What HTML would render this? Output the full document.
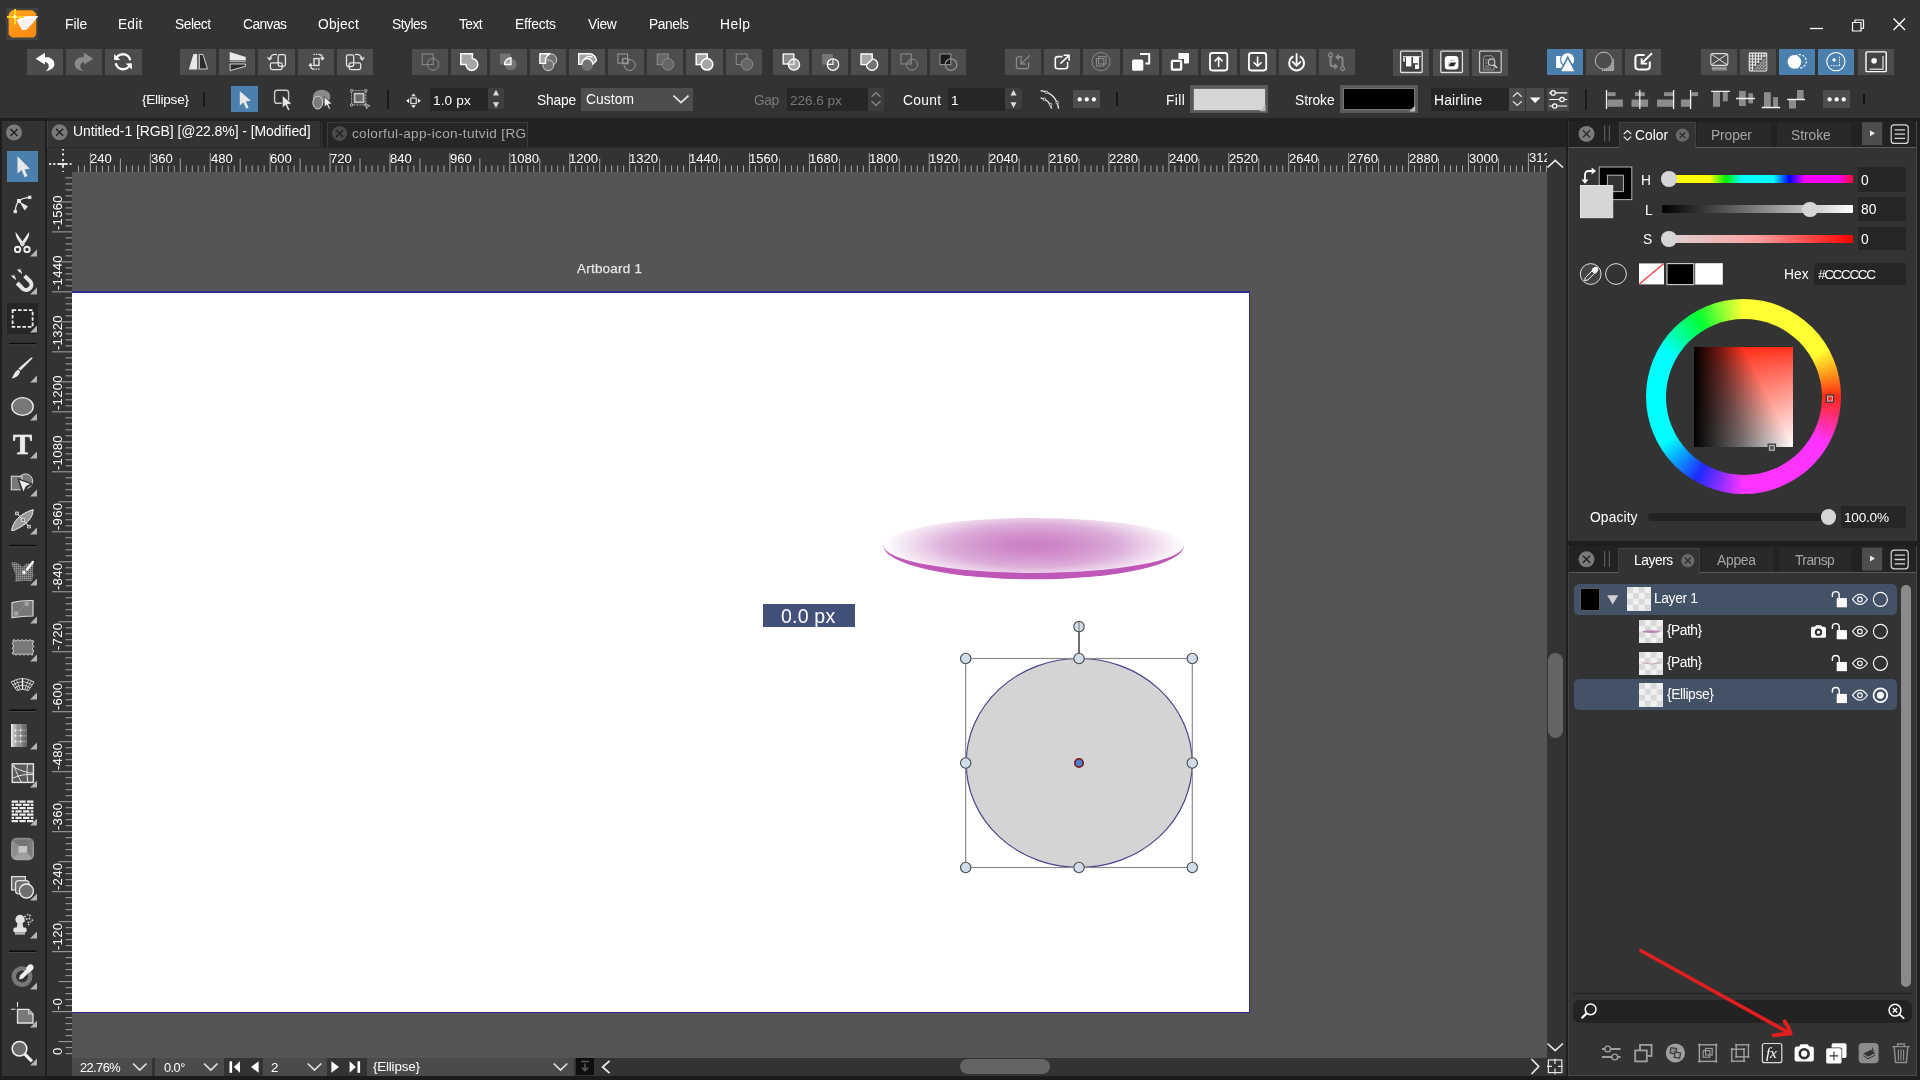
<!DOCTYPE html>
<html lang="en"><head><meta charset="utf-8"><title>Untitled-1 [RGB] - Vector editor</title>
<style>
html,body{margin:0;padding:0;}
body{width:1920px;height:1080px;overflow:hidden;background:#333333;position:relative;
font-family:"Liberation Sans",sans-serif;font-size:13.5px;color:#fff;}
body>div,body>span,body>svg{position:absolute;display:block;}
span{white-space:nowrap;will-change:transform;}
svg{overflow:visible;}
</style></head><body>
<div style="left:72px;top:172px;width:1475.2px;height:886px;background:#555555;"></div>
<div style="left:72px;top:291px;width:1178px;height:722px;background:#2c2c8c;"></div>
<div style="left:72px;top:292.5px;width:1176.5px;height:719px;background:#ffffff;"></div>
<span style="left:577.25px;top:261px;font-size:13.4px;line-height:15px;color:#e4e4e4;letter-spacing:0.26px;-webkit-text-stroke:0.25px #e4e4e4;">Artboard 1</span>
<svg style="left:0px;top:0px;" width="1920" height="1080" viewBox="0 0 1920 1080">
<defs>
<radialGradient id="pg" gradientUnits="userSpaceOnUse" cx="1033.7" cy="545.4" r="150.3" gradientTransform="translate(0 545.4) scale(1 0.245) translate(0 -545.4)">
<stop offset="0" stop-color="#cb80c6"/><stop offset="0.15" stop-color="#cd86c8"/><stop offset="0.35" stop-color="#d396cf"/><stop offset="0.58" stop-color="#ddaed9"/>
<stop offset="0.75" stop-color="#ebd0e9"/><stop offset="0.9" stop-color="#f7ecf6"/><stop offset="1" stop-color="#ffffff"/>
</radialGradient>
</defs>
<path d="M883.4 545.8A150.3 33.5 0 0 0 1184 545.8Z" fill="#bf57b8"/>
<ellipse cx="1033.7" cy="545.4" rx="150.2" ry="27.5" fill="url(#pg)"/>
<ellipse cx="1079.2" cy="763" rx="113" ry="104.5" fill="#d4d4d4" stroke="#46468e" stroke-width="1.2"/>
<rect x="965.7" y="658.5" width="226.6" height="209" fill="none" stroke="#8a8a8a" stroke-width="1.2"/>
<line x1="1079" y1="627" x2="1079" y2="658" stroke="#333" stroke-width="1.4"/>
<circle cx="965.7" cy="658.5" r="5.2" fill="#cfdcea" stroke="#4a4a4a" stroke-width="1.1"/><circle cx="1079" cy="658.5" r="5.2" fill="#cfdcea" stroke="#4a4a4a" stroke-width="1.1"/><circle cx="1192.3" cy="658.5" r="5.2" fill="#cfdcea" stroke="#4a4a4a" stroke-width="1.1"/><circle cx="965.7" cy="763" r="5.2" fill="#cfdcea" stroke="#4a4a4a" stroke-width="1.1"/><circle cx="1192.3" cy="763" r="5.2" fill="#cfdcea" stroke="#4a4a4a" stroke-width="1.1"/><circle cx="965.7" cy="867.5" r="5.2" fill="#cfdcea" stroke="#4a4a4a" stroke-width="1.1"/><circle cx="1079" cy="867.5" r="5.2" fill="#cfdcea" stroke="#4a4a4a" stroke-width="1.1"/><circle cx="1192.3" cy="867.5" r="5.2" fill="#cfdcea" stroke="#4a4a4a" stroke-width="1.1"/><circle cx="1079" cy="626.6" r="5.2" fill="#cfdcea" stroke="#4a4a4a" stroke-width="1.1"/><line x1="1079" y1="622" x2="1079" y2="631" stroke="#777" stroke-width="1"/><circle cx="1079" cy="763" r="4.2" fill="#4f7fd0" stroke="#7a2020" stroke-width="1.8"/></svg>
<div style="left:763.3px;top:604.4px;width:92.2px;height:22.4px;background:#435079;"></div>
<span style="left:781.25px;top:605px;font-size:19.6px;line-height:22px;color:#ffffff;letter-spacing:0.17px;">0.0 px</span>
<div style="left:47px;top:147px;width:1500.2px;height:25px;background:#333333;"></div>
<div style="left:47px;top:147px;width:25px;height:911px;background:#333333;"></div>
<svg style="left:0px;top:0px;" width="1920" height="1080" viewBox="0 0 1920 1080"><path d="M78.42 165.5V172M84.41 165.5V172M90.4 153V172M96.39 165.5V172M102.38 165.5V172M108.38 165.5V172M114.37 165.5V172M120.36 158.5V172M126.35 165.5V172M132.34 165.5V172M138.33 165.5V172M144.33 165.5V172M150.32 153V172M156.31 165.5V172M162.3 165.5V172M168.29 165.5V172M174.28 165.5V172M180.28 158.5V172M186.27 165.5V172M192.26 165.5V172M198.25 165.5V172M204.24 165.5V172M210.23 153V172M216.23 165.5V172M222.22 165.5V172M228.21 165.5V172M234.2 165.5V172M240.19 158.5V172M246.18 165.5V172M252.18 165.5V172M258.17 165.5V172M264.16 165.5V172M270.15 153V172M276.14 165.5V172M282.13 165.5V172M288.13 165.5V172M294.12 165.5V172M300.11 158.5V172M306.1 165.5V172M312.09 165.5V172M318.08 165.5V172M324.08 165.5V172M330.07 153V172M336.06 165.5V172M342.05 165.5V172M348.04 165.5V172M354.03 165.5V172M360.03 158.5V172M366.02 165.5V172M372.01 165.5V172M378 165.5V172M383.99 165.5V172M389.99 153V172M395.98 165.5V172M401.97 165.5V172M407.96 165.5V172M413.95 165.5V172M419.94 158.5V172M425.94 165.5V172M431.93 165.5V172M437.92 165.5V172M443.91 165.5V172M449.9 153V172M455.89 165.5V172M461.89 165.5V172M467.88 165.5V172M473.87 165.5V172M479.86 158.5V172M485.85 165.5V172M491.84 165.5V172M497.84 165.5V172M503.83 165.5V172M509.82 153V172M515.81 165.5V172M521.8 165.5V172M527.79 165.5V172M533.79 165.5V172M539.78 158.5V172M545.77 165.5V172M551.76 165.5V172M557.75 165.5V172M563.74 165.5V172M569.74 153V172M575.73 165.5V172M581.72 165.5V172M587.71 165.5V172M593.7 165.5V172M599.69 158.5V172M605.69 165.5V172M611.68 165.5V172M617.67 165.5V172M623.66 165.5V172M629.65 153V172M635.64 165.5V172M641.64 165.5V172M647.63 165.5V172M653.62 165.5V172M659.61 158.5V172M665.6 165.5V172M671.59 165.5V172M677.59 165.5V172M683.58 165.5V172M689.57 153V172M695.56 165.5V172M701.55 165.5V172M707.55 165.5V172M713.54 165.5V172M719.53 158.5V172M725.52 165.5V172M731.51 165.5V172M737.5 165.5V172M743.5 165.5V172M749.49 153V172M755.48 165.5V172M761.47 165.5V172M767.46 165.5V172M773.45 165.5V172M779.45 158.5V172M785.44 165.5V172M791.43 165.5V172M797.42 165.5V172M803.41 165.5V172M809.4 153V172M815.4 165.5V172M821.39 165.5V172M827.38 165.5V172M833.37 165.5V172M839.36 158.5V172M845.35 165.5V172M851.35 165.5V172M857.34 165.5V172M863.33 165.5V172M869.32 153V172M875.31 165.5V172M881.3 165.5V172M887.3 165.5V172M893.29 165.5V172M899.28 158.5V172M905.27 165.5V172M911.26 165.5V172M917.25 165.5V172M923.25 165.5V172M929.24 153V172M935.23 165.5V172M941.22 165.5V172M947.21 165.5V172M953.2 165.5V172M959.2 158.5V172M965.19 165.5V172M971.18 165.5V172M977.17 165.5V172M983.16 165.5V172M989.15 153V172M995.15 165.5V172M1001.14 165.5V172M1007.13 165.5V172M1013.12 165.5V172M1019.11 158.5V172M1025.11 165.5V172M1031.1 165.5V172M1037.09 165.5V172M1043.08 165.5V172M1049.07 153V172M1055.06 165.5V172M1061.06 165.5V172M1067.05 165.5V172M1073.04 165.5V172M1079.03 158.5V172M1085.02 165.5V172M1091.01 165.5V172M1097.01 165.5V172M1103 165.5V172M1108.99 153V172M1114.98 165.5V172M1120.97 165.5V172M1126.96 165.5V172M1132.96 165.5V172M1138.95 158.5V172M1144.94 165.5V172M1150.93 165.5V172M1156.92 165.5V172M1162.91 165.5V172M1168.91 153V172M1174.9 165.5V172M1180.89 165.5V172M1186.88 165.5V172M1192.87 165.5V172M1198.86 158.5V172M1204.86 165.5V172M1210.85 165.5V172M1216.84 165.5V172M1222.83 165.5V172M1228.82 153V172M1234.81 165.5V172M1240.81 165.5V172M1246.8 165.5V172M1252.79 165.5V172M1258.78 158.5V172M1264.77 165.5V172M1270.76 165.5V172M1276.76 165.5V172M1282.75 165.5V172M1288.74 153V172M1294.73 165.5V172M1300.72 165.5V172M1306.72 165.5V172M1312.71 165.5V172M1318.7 158.5V172M1324.69 165.5V172M1330.68 165.5V172M1336.67 165.5V172M1342.67 165.5V172M1348.66 153V172M1354.65 165.5V172M1360.64 165.5V172M1366.63 165.5V172M1372.62 165.5V172M1378.62 158.5V172M1384.61 165.5V172M1390.6 165.5V172M1396.59 165.5V172M1402.58 165.5V172M1408.57 153V172M1414.57 165.5V172M1420.56 165.5V172M1426.55 165.5V172M1432.54 165.5V172M1438.53 158.5V172M1444.52 165.5V172M1450.52 165.5V172M1456.51 165.5V172M1462.5 165.5V172M1468.49 153V172M1474.48 165.5V172M1480.47 165.5V172M1486.47 165.5V172M1492.46 165.5V172M1498.45 158.5V172M1504.44 165.5V172M1510.43 165.5V172M1516.42 165.5V172M1522.42 165.5V172M1528.41 153V172M1534.4 165.5V172M1540.39 165.5V172M1546.38 165.5V172" stroke="#a6a6a6" stroke-width="1" fill="none"/><path d="M49.2 164H71.5" stroke="#e4e4e4" stroke-width="1.9" stroke-dasharray="2 2.1" fill="none"/><path d="M63 149V172" stroke="#e4e4e4" stroke-width="1.9" stroke-dasharray="1.6 2.6 2.4 3.4 2.2 2 4.6 3.2 2 9" fill="none"/><path d="M59 164H67" stroke="#e4e4e4" stroke-width="1.9"/><path d="M65.5 177.92H72M65.5 183.92H72M65.5 189.91H72M65.5 195.91H72M58.5 201.91H72M65.5 207.91H72M65.5 213.91H72M65.5 219.9H72M65.5 225.9H72M52 231.9H72M65.5 237.9H72M65.5 243.9H72M65.5 249.89H72M65.5 255.89H72M58.5 261.89H72M65.5 267.89H72M65.5 273.89H72M65.5 279.88H72M65.5 285.88H72M52 291.88H72M65.5 297.88H72M65.5 303.88H72M65.5 309.87H72M65.5 315.87H72M58.5 321.87H72M65.5 327.87H72M65.5 333.87H72M65.5 339.86H72M65.5 345.86H72M52 351.86H72M65.5 357.86H72M65.5 363.86H72M65.5 369.85H72M65.5 375.85H72M58.5 381.85H72M65.5 387.85H72M65.5 393.85H72M65.5 399.84H72M65.5 405.84H72M52 411.84H72M65.5 417.84H72M65.5 423.84H72M65.5 429.83H72M65.5 435.83H72M58.5 441.83H72M65.5 447.83H72M65.5 453.83H72M65.5 459.82H72M65.5 465.82H72M52 471.82H72M65.5 477.82H72M65.5 483.82H72M65.5 489.81H72M65.5 495.81H72M58.5 501.81H72M65.5 507.81H72M65.5 513.81H72M65.5 519.8H72M65.5 525.8H72M52 531.8H72M65.5 537.8H72M65.5 543.8H72M65.5 549.79H72M65.5 555.79H72M58.5 561.79H72M65.5 567.79H72M65.5 573.79H72M65.5 579.78H72M65.5 585.78H72M52 591.78H72M65.5 597.78H72M65.5 603.78H72M65.5 609.77H72M65.5 615.77H72M58.5 621.77H72M65.5 627.77H72M65.5 633.77H72M65.5 639.76H72M65.5 645.76H72M52 651.76H72M65.5 657.76H72M65.5 663.76H72M65.5 669.75H72M65.5 675.75H72M58.5 681.75H72M65.5 687.75H72M65.5 693.75H72M65.5 699.74H72M65.5 705.74H72M52 711.74H72M65.5 717.74H72M65.5 723.74H72M65.5 729.73H72M65.5 735.73H72M58.5 741.73H72M65.5 747.73H72M65.5 753.73H72M65.5 759.72H72M65.5 765.72H72M52 771.72H72M65.5 777.72H72M65.5 783.72H72M65.5 789.71H72M65.5 795.71H72M58.5 801.71H72M65.5 807.71H72M65.5 813.71H72M65.5 819.7H72M65.5 825.7H72M52 831.7H72M65.5 837.7H72M65.5 843.7H72M65.5 849.69H72M65.5 855.69H72M58.5 861.69H72M65.5 867.69H72M65.5 873.69H72M65.5 879.68H72M65.5 885.68H72M52 891.68H72M65.5 897.68H72M65.5 903.68H72M65.5 909.67H72M65.5 915.67H72M58.5 921.67H72M65.5 927.67H72M65.5 933.67H72M65.5 939.66H72M65.5 945.66H72M52 951.66H72M65.5 957.66H72M65.5 963.66H72M65.5 969.65H72M65.5 975.65H72M58.5 981.65H72M65.5 987.65H72M65.5 993.65H72M65.5 999.64H72M65.5 1005.64H72M52 1011.64H72M65.5 1017.64H72M65.5 1023.64H72M65.5 1029.63H72M65.5 1035.63H72M58.5 1041.63H72M65.5 1047.63H72M65.5 1053.63H72" stroke="#a6a6a6" stroke-width="1" fill="none"/></svg>
<span style="left:90.45px;top:151px;font-size:13.1px;line-height:15px;color:#ffffff;">240</span>
<span style="left:150.52px;top:151px;font-size:13.1px;line-height:15px;color:#ffffff;">360</span>
<span style="left:210.63px;top:151px;font-size:13.1px;line-height:15px;color:#ffffff;">480</span>
<span style="left:270.2px;top:151px;font-size:13.1px;line-height:15px;color:#ffffff;">600</span>
<span style="left:330.12px;top:151px;font-size:13.1px;line-height:15px;color:#ffffff;">720</span>
<span style="left:390.13px;top:151px;font-size:13.1px;line-height:15px;color:#ffffff;">840</span>
<span style="left:450px;top:151px;font-size:13.1px;line-height:15px;color:#ffffff;">960</span>
<span style="left:509.52px;top:151px;font-size:13.1px;line-height:15px;color:#ffffff;">1080</span>
<span style="left:569.44px;top:151px;font-size:13.1px;line-height:15px;color:#ffffff;">1200</span>
<span style="left:629.35px;top:151px;font-size:13.1px;line-height:15px;color:#ffffff;">1320</span>
<span style="left:689.27px;top:151px;font-size:13.1px;line-height:15px;color:#ffffff;">1440</span>
<span style="left:749.19px;top:151px;font-size:13.1px;line-height:15px;color:#ffffff;">1560</span>
<span style="left:809.1px;top:151px;font-size:13.1px;line-height:15px;color:#ffffff;">1680</span>
<span style="left:869.02px;top:151px;font-size:13.1px;line-height:15px;color:#ffffff;">1800</span>
<span style="left:928.94px;top:151px;font-size:13.1px;line-height:15px;color:#ffffff;">1920</span>
<span style="left:989.21px;top:151px;font-size:13.1px;line-height:15px;color:#ffffff;">2040</span>
<span style="left:1049.12px;top:151px;font-size:13.1px;line-height:15px;color:#ffffff;">2160</span>
<span style="left:1109.04px;top:151px;font-size:13.1px;line-height:15px;color:#ffffff;">2280</span>
<span style="left:1168.96px;top:151px;font-size:13.1px;line-height:15px;color:#ffffff;">2400</span>
<span style="left:1228.87px;top:151px;font-size:13.1px;line-height:15px;color:#ffffff;">2520</span>
<span style="left:1288.79px;top:151px;font-size:13.1px;line-height:15px;color:#ffffff;">2640</span>
<span style="left:1348.71px;top:151px;font-size:13.1px;line-height:15px;color:#ffffff;">2760</span>
<span style="left:1408.62px;top:151px;font-size:13.1px;line-height:15px;color:#ffffff;">2880</span>
<span style="left:1468.69px;top:151px;font-size:13.1px;line-height:15px;color:#ffffff;">3000</span>
<span style="left:1529.01px;top:147px;width:17.99px;overflow:hidden;font-size:13.1px;line-height:22px;color:#fff;height:22px;display:block">3120</span>
<div style="left:47px;top:147px;width:25px;height:908.6px;overflow:hidden;">
<span style="position:absolute;display:block;left:0.6px;top:83.3px;width:0;height:0;font-size:13.1px;letter-spacing:0.25px;line-height:20px;color:#fff;transform:rotate(-90deg);transform-origin:0 0;">-1560</span>
<span style="position:absolute;display:block;left:0.6px;top:143.28px;width:0;height:0;font-size:13.1px;letter-spacing:0.25px;line-height:20px;color:#fff;transform:rotate(-90deg);transform-origin:0 0;">-1440</span>
<span style="position:absolute;display:block;left:0.6px;top:203.26px;width:0;height:0;font-size:13.1px;letter-spacing:0.25px;line-height:20px;color:#fff;transform:rotate(-90deg);transform-origin:0 0;">-1320</span>
<span style="position:absolute;display:block;left:0.6px;top:263.24px;width:0;height:0;font-size:13.1px;letter-spacing:0.25px;line-height:20px;color:#fff;transform:rotate(-90deg);transform-origin:0 0;">-1200</span>
<span style="position:absolute;display:block;left:0.6px;top:323.22px;width:0;height:0;font-size:13.1px;letter-spacing:0.25px;line-height:20px;color:#fff;transform:rotate(-90deg);transform-origin:0 0;">-1080</span>
<span style="position:absolute;display:block;left:0.6px;top:383.2px;width:0;height:0;font-size:13.1px;letter-spacing:0.25px;line-height:20px;color:#fff;transform:rotate(-90deg);transform-origin:0 0;">-960</span>
<span style="position:absolute;display:block;left:0.6px;top:443.18px;width:0;height:0;font-size:13.1px;letter-spacing:0.25px;line-height:20px;color:#fff;transform:rotate(-90deg);transform-origin:0 0;">-840</span>
<span style="position:absolute;display:block;left:0.6px;top:503.16px;width:0;height:0;font-size:13.1px;letter-spacing:0.25px;line-height:20px;color:#fff;transform:rotate(-90deg);transform-origin:0 0;">-720</span>
<span style="position:absolute;display:block;left:0.6px;top:563.14px;width:0;height:0;font-size:13.1px;letter-spacing:0.25px;line-height:20px;color:#fff;transform:rotate(-90deg);transform-origin:0 0;">-600</span>
<span style="position:absolute;display:block;left:0.6px;top:623.12px;width:0;height:0;font-size:13.1px;letter-spacing:0.25px;line-height:20px;color:#fff;transform:rotate(-90deg);transform-origin:0 0;">-480</span>
<span style="position:absolute;display:block;left:0.6px;top:683.1px;width:0;height:0;font-size:13.1px;letter-spacing:0.25px;line-height:20px;color:#fff;transform:rotate(-90deg);transform-origin:0 0;">-360</span>
<span style="position:absolute;display:block;left:0.6px;top:743.08px;width:0;height:0;font-size:13.1px;letter-spacing:0.25px;line-height:20px;color:#fff;transform:rotate(-90deg);transform-origin:0 0;">-240</span>
<span style="position:absolute;display:block;left:0.6px;top:803.06px;width:0;height:0;font-size:13.1px;letter-spacing:0.25px;line-height:20px;color:#fff;transform:rotate(-90deg);transform-origin:0 0;">-120</span>
<span style="position:absolute;display:block;left:0.6px;top:863.04px;width:0;height:0;font-size:13.1px;letter-spacing:0.25px;line-height:20px;color:#fff;transform:rotate(-90deg);transform-origin:0 0;">-0</span>
<span style="position:absolute;display:block;left:0.6px;top:923.02px;width:0;height:0;font-size:13.1px;letter-spacing:0.25px;line-height:20px;color:#fff;transform:rotate(-90deg);transform-origin:0 0;">120</span>
</div>
<div style="left:0px;top:118px;width:1920px;height:29px;background:#222222;"></div>
<div style="left:47px;top:120.6px;width:273.3px;height:26.4px;background:#333333;"></div>
<div style="left:321.3px;top:121.5px;width:1px;height:25.5px;background:#383838;"></div>
<div style="left:47px;top:120.6px;width:0.8px;height:26.4px;background:#444;"></div>
<div style="left:47px;top:146.5px;width:1500.2px;height:0.9px;background:#2a2a2a;"></div>
<span style="left:72.6px;top:123px;font-size:14px;line-height:16px;color:#ffffff;letter-spacing:-0.08px;">Untitled-1 [RGB] [@22.8%] - [Modified]</span>
<div style="left:327.2px;top:122.4px;width:200.8px;height:24.6px;background:#262626;border:1px solid #3c3c3c;border-bottom:none;box-sizing:border-box;"></div>
<span style="left:352.45px;top:126px;font-size:13.6px;line-height:15px;color:#a8a8a8;letter-spacing:0.32px;">colorful-app-icon-tutvid [RG</span>
<svg style="left:0px;top:0px;" width="1920" height="1080" viewBox="0 0 1920 1080"><circle cx="59.6" cy="132.3" r="8" fill="#7a7a7a"/><path d="M56.1 128.8l7 7m0 -7l-7 7" stroke="#1e1e1e" stroke-width="1.3" fill="none"/><circle cx="339.6" cy="133.5" r="7.6" fill="#4a4a4a"/><path d="M336.1 130l7 7m0 -7l-7 7" stroke="#1e1e1e" stroke-width="1.3" fill="none"/></svg>
<div style="left:1547.2px;top:147px;width:18.3px;height:929px;background:#333333;"></div>
<div style="left:1548px;top:652.6px;width:15.3px;height:85.5px;background:#656565;border-radius:7.6px;"></div>
<div style="left:613px;top:1057.8px;width:934.2px;height:18.3px;background:#333333;"></div>
<div style="left:960px;top:1058.8px;width:90.1px;height:15.5px;background:#646464;border-radius:7.7px;"></div>
<svg style="left:0px;top:0px;" width="1920" height="1080" viewBox="0 0 1920 1080"><path d="M1547.5 167.5l7.7 -7.2l7.7 7.2" stroke="#e8e8e8" stroke-width="1.7" fill="none"/><path d="M1547.5 1043.5l7.7 7.2l7.7 -7.2" stroke="#e8e8e8" stroke-width="1.7" fill="none"/><path d="M1531.5 1059l7.2 7.5l-7.2 7.5" stroke="#e8e8e8" stroke-width="1.7" fill="none"/><rect x="1548.4" y="1060" width="13.4" height="12.6" fill="none" stroke="#e8e8e8" stroke-width="1.2"/><path d="M1555 1058.4v5.6M1555 1068.6v5.6M1547 1066.3h5M1558 1066.3h5" stroke="#e8e8e8" stroke-width="1.2"/></svg>
<div style="left:72px;top:1057.8px;width:541px;height:18.3px;background:#333333;"></div>
<div style="left:72px;top:1057.8px;width:80px;height:18.2px;background:#4b4b4b;"></div>
<div style="left:155px;top:1057.8px;width:68.6px;height:18.2px;background:#4b4b4b;"></div>
<div style="left:263px;top:1057.8px;width:63.5px;height:18.2px;background:#4b4b4b;"></div>
<div style="left:367px;top:1057.8px;width:206.5px;height:18.2px;background:#4b4b4b;"></div>
<div style="left:576px;top:1058.3px;width:18px;height:17px;background:#0e0e0e;"></div>
<span style="left:80.35px;top:1060px;font-size:12.8px;line-height:15px;color:#ffffff;letter-spacing:-0.57px;">22.76%</span>
<span style="left:163.5px;top:1060px;font-size:12.8px;line-height:15px;color:#ffffff;letter-spacing:-0.55px;">0.0°</span>
<span style="left:270.85px;top:1060px;font-size:13.4px;line-height:15px;color:#ffffff;">2</span>
<span style="left:372.6px;top:1059px;font-size:13.4px;line-height:15px;color:#ffffff;letter-spacing:-0.19px;">{Ellipse}</span>
<svg style="left:0px;top:0px;" width="1920" height="1080" viewBox="0 0 1920 1080"><path d="M133 1063.5l6.8 6.6l6.8 -6.6" stroke="#e0e0e0" stroke-width="1.7" fill="none"/><path d="M204 1063.5l6.8 6.6l6.8 -6.6" stroke="#e0e0e0" stroke-width="1.7" fill="none"/><path d="M307.7 1063.5l6.8 6.6l6.8 -6.6" stroke="#e0e0e0" stroke-width="1.7" fill="none"/><path d="M553.7 1063.5l6.8 6.6l6.8 -6.6" stroke="#e0e0e0" stroke-width="1.7" fill="none"/><path d="M230.8 1061.3v11.5" stroke="#fff" stroke-width="2.6"/><path d="M240 1061.3v11.5l-6.2 -5.75z" fill="#fff"/><path d="M258.6 1061.3v11.5l-7.6 -5.75z" fill="#fff"/><path d="M331.4 1061.3v11.5l7.6 -5.75z" fill="#fff"/><path d="M349.6 1061.3v11.5l6.2 -5.75z" fill="#fff"/><path d="M358.8 1061.3v11.5" stroke="#fff" stroke-width="2.6"/><path d="M581 1061.6h8M585 1063.4v7M581.8 1067.4l3.2 3.2l3.2 -3.2" stroke="#5a5a5a" stroke-width="1.5" fill="none"/><path d="M609.6 1060.8l-7 6.2l7 6.2" stroke="#e8e8e8" stroke-width="1.8" fill="none"/></svg>
<div style="left:0px;top:1076px;width:1920px;height:4px;background:#1b1b1b;"></div>
<div style="left:0px;top:0px;width:1920px;height:118px;background:#333333;"></div>
<div style="left:6px;top:8px;width:32px;height:32px;background:#414141;"></div>
<svg style="left:6px;top:8px;" width="32" height="32" viewBox="0 0 32 32">
<defs><linearGradient id="lg" x1="0" y1="0" x2="0.6" y2="1"><stop offset="0" stop-color="#ffa51e"/><stop offset="1" stop-color="#fb8a12"/></linearGradient></defs>
<path d="M6 2.2H26.6L30.2 5.6V25.6Q30.2 27 29 28L27.6 29.4H6L2.6 26.4V7Q2.6 6 3.2 5.2Z" fill="url(#lg)"/>
<path d="M10.4 12L18.6 8.4L32.2 8.1L27.4 14.4L20.2 21.9H16Z" fill="#f4f1ee"/>
<path d="M10.4 12L18.6 8.4L32.2 8.1L30.8 10L17 10.6L13 14.6Z" fill="#ffffff"/>
<path d="M9 1V16.6M1 9H18" stroke="#ffd814" stroke-width="2"/>
<circle cx="9" cy="8.8" r="1.7" fill="#fff6d8"/>
</svg>
<span style="left:64.85px;top:17px;font-size:13.8px;line-height:15px;color:#ffffff;letter-spacing:-0.05px;">File</span>
<span style="left:118.15px;top:17px;font-size:13.8px;line-height:15px;color:#ffffff;letter-spacing:0.15px;">Edit</span>
<span style="left:175.05px;top:17px;font-size:13.8px;line-height:15px;color:#ffffff;letter-spacing:-0.46px;">Select</span>
<span style="left:243.3px;top:17px;font-size:13.8px;line-height:15px;color:#ffffff;letter-spacing:-0.58px;">Canvas</span>
<span style="left:318.35px;top:17px;font-size:13.8px;line-height:15px;color:#ffffff;letter-spacing:0.17px;">Object</span>
<span style="left:391.65px;top:17px;font-size:13.8px;line-height:15px;color:#ffffff;letter-spacing:-0.49px;">Styles</span>
<span style="left:459.4px;top:17px;font-size:13.8px;line-height:15px;color:#ffffff;letter-spacing:-0.55px;">Text</span>
<span style="left:515.15px;top:17px;font-size:13.8px;line-height:15px;color:#ffffff;letter-spacing:-0.15px;">Effects</span>
<span style="left:588.25px;top:17px;font-size:13.8px;line-height:15px;color:#ffffff;letter-spacing:-0.32px;">View</span>
<span style="left:648.85px;top:17px;font-size:13.8px;line-height:15px;color:#ffffff;letter-spacing:-0.45px;">Panels</span>
<span style="left:719.85px;top:17px;font-size:13.8px;line-height:15px;color:#ffffff;letter-spacing:0.55px;">Help</span>
<svg style="left:0px;top:0px;" width="1920" height="60" viewBox="0 0 1920 60">
<path d="M1810 28.5h13" stroke="#fff" stroke-width="1.3"/>
<path d="M1852.5 22.5h8.5v8.5h-8.5z" fill="none" stroke="#fff" stroke-width="1.2"/>
<path d="M1855 22.5v-2.5h8.5v8.5h-2.5" fill="none" stroke="#fff" stroke-width="1.2"/>
<path d="M1893.5 18.5l11.5 11.5m0 -11.5l-11.5 11.5" stroke="#fff" stroke-width="1.4"/>
</svg>
<div style="left:27px;top:48.8px;width:36.2px;height:26.4px;background:#4d4d4d;"></div>
<svg style="left:27px;top:49px;" width="36" height="26.3" viewBox="0 0 36 26.3"><path d="M8.6 9.7L18 3.7V8C24.5 8 27.4 11.5 27.4 15.2C27.4 18.8 23.6 21.3 18.6 22.2C21.6 20.2 22.6 17.4 21.2 15C20.3 13.5 19.2 12.9 18 12.9V15.6Z" fill="#fff"/></svg>
<div style="left:66.2px;top:48.8px;width:36.2px;height:26.4px;background:#4d4d4d;"></div>
<svg style="left:66.2px;top:49px;" width="36" height="26.3" viewBox="0 0 36 26.3"><path d="M27.4 9.7L18 3.7V8C11.5 8 8.6 11.5 8.6 15.2C8.6 18.8 12.4 21.3 17.4 22.2C14.4 20.2 13.4 17.4 14.8 15C15.7 13.5 16.8 12.9 18 12.9V15.6Z" fill="#8a8a8a"/></svg>
<div style="left:105.4px;top:48.8px;width:36.2px;height:26.4px;background:#4d4d4d;"></div>
<svg style="left:105.4px;top:49px;" width="36" height="26.3" viewBox="0 0 36 26.3"><path d="M10.7 11A7.4 7.4 0 0 1 25.2 11.2" fill="none" stroke="#fff" stroke-width="2.4"/><path d="M25.3 14.4A7.4 7.4 0 0 1 10.8 14.2" fill="none" stroke="#fff" stroke-width="2.4"/><path d="M9.2 4.9V11H15.3Z" fill="#fff"/><path d="M26.8 20.6V14.5H20.7Z" fill="#fff"/></svg>
<div style="left:180px;top:48.8px;width:36.2px;height:26.4px;background:#4d4d4d;"></div>
<svg style="left:180px;top:49px;" width="36" height="26.3" viewBox="0 0 36 26.3"><path d="M8.8 20.5H17V5.1H13.4Z" fill="#e8e8e8"/><path d="M19.4 5.5H23L27.5 20H19.4Z" fill="#2b2b2b" stroke="#e0e0e0" stroke-width="0.9"/><path d="M18.2 4.5V21" stroke="#a0a0a0" stroke-width="0.8"/></svg>
<div style="left:219.2px;top:48.8px;width:36.2px;height:26.4px;background:#4d4d4d;"></div>
<svg style="left:219.2px;top:49px;" width="36" height="26.3" viewBox="0 0 36 26.3"><path d="M10.7 3.1L26.8 8V11.1H10.7Z" fill="#e8e8e8"/><path d="M10.7 11.3H26.8V13H10.7Z" fill="#a4a4a4"/><path d="M11.1 15H26.4V17.3L11.1 21.6Z" fill="#2b2b2b" stroke="#e0e0e0" stroke-width="0.9"/></svg>
<div style="left:258.4px;top:48.8px;width:36.2px;height:26.4px;background:#4d4d4d;"></div>
<svg style="left:258.4px;top:49px;" width="36" height="26.3" viewBox="0 0 36 26.3"><rect x="20.2" y="5.6" width="7.2" height="11.8" rx="1.8" fill="none" stroke="#e6e6e6" stroke-width="1.3"/><rect x="12.4" y="13.8" width="11.8" height="6.8" rx="1.8" fill="none" stroke="#e6e6e6" stroke-width="1.3"/><path d="M19 5.6C15 4.6 12.4 6.6 11.6 10" fill="none" stroke="#e6e6e6" stroke-width="1.2"/><path d="M9.6 8.2L11.4 10.8L14 8.8" fill="none" stroke="#e6e6e6" stroke-width="1.2"/></svg>
<div style="left:297.6px;top:48.8px;width:36.2px;height:26.4px;background:#4d4d4d;"></div>
<svg style="left:297.6px;top:49px;" width="36" height="26.3" viewBox="0 0 36 26.3"><rect x="16" y="9.6" width="5" height="6.8" fill="none" stroke="#e6e6e6" stroke-width="1.4"/><path d="M15.5 5.4H20.5" stroke="#e6e6e6" stroke-width="1.2" stroke-dasharray="1.5 1"/><path d="M20.5 5.4C23.4 5.4 24.4 7 24.4 9.2" fill="none" stroke="#e6e6e6" stroke-width="1.3"/><path d="M22 8.6H26.8L24.4 11.8Z" fill="#e6e6e6"/><path d="M21.5 20.2H16.5" stroke="#e6e6e6" stroke-width="1.2" stroke-dasharray="1.5 1"/><path d="M16.5 20.2C13.6 20.2 12.6 18.6 12.6 16.4" fill="none" stroke="#e6e6e6" stroke-width="1.3"/><path d="M15 17H10.2L12.6 13.8Z" fill="#e6e6e6"/></svg>
<div style="left:336.8px;top:48.8px;width:36.2px;height:26.4px;background:#4d4d4d;"></div>
<svg style="left:336.8px;top:49px;" width="36" height="26.3" viewBox="0 0 36 26.3"><rect x="9.5" y="5.9" width="7.2" height="11.6" rx="1.8" fill="none" stroke="#e6e6e6" stroke-width="1.3"/><rect x="12.1" y="13.8" width="11.6" height="6.8" rx="1.8" fill="none" stroke="#e6e6e6" stroke-width="1.3"/><path d="M17.8 5.6C21.8 4.6 24.4 6.6 25.2 10" fill="none" stroke="#e6e6e6" stroke-width="1.2"/><path d="M27.2 8.2L25.4 10.8L22.8 8.8" fill="none" stroke="#e6e6e6" stroke-width="1.2"/></svg>
<div style="left:412px;top:48.8px;width:36.2px;height:26.4px;background:#4d4d4d;"></div>
<svg style="left:412px;top:49px;" width="36" height="26.3" viewBox="0 0 36 26.3"><rect x="10.2" y="5" width="11" height="10.6" fill="none" stroke="#8c8c8c" stroke-width="1"/><circle cx="21" cy="15.3" r="5.8" fill="none" stroke="#8c8c8c" stroke-width="1"/></svg>
<div style="left:451.2px;top:48.8px;width:36.2px;height:26.4px;background:#4d4d4d;"></div>
<svg style="left:451.2px;top:49px;" width="36" height="26.3" viewBox="0 0 36 26.3"><path d="M9.8 4.8H21.4V9.6A5.9 5.9 0 1 1 15 15.6H9.8Z" fill="#a6a6a6" stroke="#fff" stroke-width="1.5"/></svg>
<div style="left:490.4px;top:48.8px;width:36.2px;height:26.4px;background:#4d4d4d;"></div>
<svg style="left:490.4px;top:49px;" width="36" height="26.3" viewBox="0 0 36 26.3"><rect x="9.9" y="4.6" width="11" height="10.9" fill="#737373"/><circle cx="20.7" cy="15.3" r="5.9" fill="#737373"/><path d="M14.5 15.5H21V9A6.3 6.3 0 0 0 14.5 15.5Z" fill="#a6a6a6" stroke="#fff" stroke-width="1.3"/></svg>
<div style="left:529.6px;top:48.8px;width:36.2px;height:26.4px;background:#4d4d4d;"></div>
<svg style="left:529.6px;top:49px;" width="36" height="26.3" viewBox="0 0 36 26.3"><circle cx="21" cy="10.6" r="5.7" fill="#737373" stroke="#d0d0d0" stroke-width="1"/><circle cx="18.2" cy="16.3" r="5.4" fill="#737373" stroke="#d0d0d0" stroke-width="1"/><path d="M9.9 4.8H20.2C16.5 6 14.6 10 15.6 14.4H9.9Z" fill="#a6a6a6" stroke="#fff" stroke-width="1.4"/></svg>
<div style="left:568.8px;top:48.8px;width:36.2px;height:26.4px;background:#4d4d4d;"></div>
<svg style="left:568.8px;top:49px;" width="36" height="26.3" viewBox="0 0 36 26.3"><circle cx="18.2" cy="16.4" r="5.6" fill="#737373"/><path d="M9.7 4.8H20C24.4 4.6 27.2 8 27.4 11.6L24 15.2C23 11 20 9.6 17.6 9.8C14.5 10 13 12.6 12.6 15.4H9.7Z" fill="#a6a6a6" stroke="#fff" stroke-width="1.4"/><path d="M15.6 10.4C17 7.6 20.4 6.6 23.4 8.2" fill="none" stroke="#fff" stroke-width="1.2"/></svg>
<div style="left:608px;top:48.8px;width:36.2px;height:26.4px;background:#4d4d4d;"></div>
<svg style="left:608px;top:49px;" width="36" height="26.3" viewBox="0 0 36 26.3"><rect x="9.9" y="5" width="9.6" height="9.2" fill="none" stroke="#9a9a9a" stroke-width="1"/><rect x="14.6" y="9.6" width="5.6" height="5.2" fill="none" stroke="#9a9a9a" stroke-width="1"/><path d="M21 10.8A5.4 5.4 0 1 1 16.4 16.4" fill="none" stroke="#9a9a9a" stroke-width="1"/><circle cx="17.2" cy="11.8" r="2.6" fill="none" stroke="#9a9a9a" stroke-width="0.9"/></svg>
<div style="left:647.2px;top:48.8px;width:36.2px;height:26.4px;background:#4d4d4d;"></div>
<svg style="left:647.2px;top:49px;" width="36" height="26.3" viewBox="0 0 36 26.3"><rect x="10.2" y="5" width="11" height="10.6" fill="#666666" stroke="#8e8e8e" stroke-width="1"/><circle cx="21" cy="15.3" r="5.8" fill="#666666" stroke="#8e8e8e" stroke-width="1"/></svg>
<div style="left:686.4px;top:48.8px;width:36.2px;height:26.4px;background:#4d4d4d;"></div>
<svg style="left:686.4px;top:49px;" width="36" height="26.3" viewBox="0 0 36 26.3"><rect x="10.2" y="5" width="11" height="10.6" fill="#a6a6a6" stroke="#ffffff" stroke-width="1.5"/><circle cx="21" cy="15.3" r="5.8" fill="#a6a6a6" stroke="#ffffff" stroke-width="1.5"/></svg>
<div style="left:725.6px;top:48.8px;width:36.2px;height:26.4px;background:#4d4d4d;"></div>
<svg style="left:725.6px;top:49px;" width="36" height="26.3" viewBox="0 0 36 26.3"><rect x="10.2" y="5" width="11" height="10.6" fill="none" stroke="#8e8e8e" stroke-width="1"/><circle cx="21" cy="15.3" r="5.8" fill="#666666" stroke="#8e8e8e" stroke-width="1"/></svg>
<div style="left:773px;top:48.8px;width:36.2px;height:26.4px;background:#4d4d4d;"></div>
<svg style="left:773px;top:49px;" width="36" height="26.3" viewBox="0 0 36 26.3"><rect x="10.2" y="5" width="10.6" height="10" fill="#8a8a8a" stroke="#fff" stroke-width="1.3"/><circle cx="21" cy="15.6" r="5.6" fill="#a6a6a6" stroke="#fff" stroke-width="1.3"/><path d="M16.2 15.2H21V10" fill="none" stroke="#fff" stroke-width="1.1"/></svg>
<div style="left:812.2px;top:48.8px;width:36.2px;height:26.4px;background:#4d4d4d;"></div>
<svg style="left:812.2px;top:49px;" width="36" height="26.3" viewBox="0 0 36 26.3"><rect x="10.2" y="5" width="10.6" height="10.6" fill="#767676"/><circle cx="21" cy="15.6" r="5.7" fill="#6a6a6a" stroke="#fff" stroke-width="1.3"/><path d="M15.6 15.4H21V10" fill="none" stroke="#fff" stroke-width="1.1"/></svg>
<div style="left:851.4px;top:48.8px;width:36.2px;height:26.4px;background:#4d4d4d;"></div>
<svg style="left:851.4px;top:49px;" width="36" height="26.3" viewBox="0 0 36 26.3"><circle cx="21" cy="15.6" r="5.7" fill="#737373" stroke="#fff" stroke-width="1.4"/><path d="M10 5H21.2V10.4L15.8 15.6H10Z" fill="#a6a6a6" stroke="#fff" stroke-width="1.4"/></svg>
<div style="left:890.6px;top:48.8px;width:36.2px;height:26.4px;background:#4d4d4d;"></div>
<svg style="left:890.6px;top:49px;" width="36" height="26.3" viewBox="0 0 36 26.3"><rect x="10" y="5" width="10.4" height="10" fill="none" stroke="#8e8e8e" stroke-width="1"/><circle cx="21" cy="15.6" r="5.6" fill="none" stroke="#8e8e8e" stroke-width="1"/><path d="M15.6 14.8C15.8 12.2 17.6 10.4 20.2 10.2V14.8Z" fill="#6e6e6e"/></svg>
<div style="left:929.8px;top:48.8px;width:36.2px;height:26.4px;background:#4d4d4d;"></div>
<svg style="left:929.8px;top:49px;" width="36" height="26.3" viewBox="0 0 36 26.3"><rect x="10" y="5" width="10.8" height="10.6" fill="#1a1a1a" stroke="#9a9a9a" stroke-width="1"/><circle cx="21" cy="15.6" r="5.8" fill="none" stroke="#9a9a9a" stroke-width="1.1"/></svg>
<div style="left:1005px;top:48.8px;width:36.2px;height:26.4px;background:#4d4d4d;"></div>
<svg style="left:1005px;top:49px;" width="36" height="26.3" viewBox="0 0 36 26.3"><path d="M17.5 7.8H13.6Q11.4 7.8 11.4 10V17.4Q11.4 19.6 13.6 19.6H21.4Q23.6 19.6 23.6 17.4V13.5" fill="none" stroke="#8e8e8e" stroke-width="1.2"/><path d="M24.8 6.4L16.4 14.6M16 9.6V15H21.4" fill="none" stroke="#8e8e8e" stroke-width="1.2"/></svg>
<div style="left:1044.2px;top:48.8px;width:36.2px;height:26.4px;background:#4d4d4d;"></div>
<svg style="left:1044.2px;top:49px;" width="36" height="26.3" viewBox="0 0 36 26.3"><path d="M18.5 7.6H13.8Q11.3 7.6 11.3 10.1V17.2Q11.3 19.7 13.8 19.7H21.1Q23.6 19.7 23.6 17.2V13" fill="none" stroke="#fff" stroke-width="1.6"/><path d="M16.4 14.6L25 6.4M19.6 6.3H25.1V11.8" fill="none" stroke="#fff" stroke-width="1.5"/></svg>
<div style="left:1083.4px;top:48.8px;width:36.2px;height:26.4px;background:#4d4d4d;"></div>
<svg style="left:1083.4px;top:49px;" width="36" height="26.3" viewBox="0 0 36 26.3"><circle cx="18" cy="12.6" r="9.1" fill="none" stroke="#8a8a8a" stroke-width="1"/><rect x="13.4" y="9.6" width="7.4" height="7.4" fill="none" stroke="#8a8a8a" stroke-width="1"/><rect x="15.6" y="7.6" width="7.4" height="7.4" fill="none" stroke="#8a8a8a" stroke-width="1"/></svg>
<div style="left:1122.6px;top:48.8px;width:36.2px;height:26.4px;background:#4d4d4d;"></div>
<svg style="left:1122.6px;top:49px;" width="36" height="26.3" viewBox="0 0 36 26.3"><path d="M17 4.9H26.2V14.4H22.4" fill="none" stroke="#fff" stroke-width="2"/><rect x="9.1" y="10.6" width="11.2" height="11.2" rx="1.6" fill="#fff"/></svg>
<div style="left:1161.8px;top:48.8px;width:36.2px;height:26.4px;background:#4d4d4d;"></div>
<svg style="left:1161.8px;top:49px;" width="36" height="26.3" viewBox="0 0 36 26.3"><path d="M16.5 3.9H25.8Q27 3.9 27 5.1V13.2Q27 14.4 25.8 14.4H22V10H16.5Z" fill="#fff"/><rect x="9.9" y="11.8" width="9.2" height="8.8" rx="0.6" fill="none" stroke="#fff" stroke-width="2.3"/></svg>
<div style="left:1201px;top:48.8px;width:36.2px;height:26.4px;background:#4d4d4d;"></div>
<svg style="left:1201px;top:49px;" width="36" height="26.3" viewBox="0 0 36 26.3"><rect x="9" y="4" width="17.3" height="17.5" rx="2.4" fill="none" stroke="#fff" stroke-width="1.8"/><path d="M17.6 18V8.6M13.6 12.4L17.6 8.4L21.6 12.4" fill="none" stroke="#fff" stroke-width="1.6"/></svg>
<div style="left:1240.2px;top:48.8px;width:36.2px;height:26.4px;background:#4d4d4d;"></div>
<svg style="left:1240.2px;top:49px;" width="36" height="26.3" viewBox="0 0 36 26.3"><rect x="8.9" y="4" width="17.3" height="17.5" rx="2.4" fill="none" stroke="#fff" stroke-width="1.8"/><path d="M17.6 7.6V17M13.6 13.2L17.6 17.2L21.6 13.2" fill="none" stroke="#fff" stroke-width="1.6"/></svg>
<div style="left:1279.4px;top:48.8px;width:36.2px;height:26.4px;background:#4d4d4d;"></div>
<svg style="left:1279.4px;top:49px;" width="36" height="26.3" viewBox="0 0 36 26.3"><path d="M14.4 7.4A7.4 7.4 0 1 0 20.8 7.4" fill="none" stroke="#fff" stroke-width="1.9"/><path d="M17.6 4.2V16.4M13.2 12.4L17.6 16.8L22 12.4" fill="none" stroke="#fff" stroke-width="1.8"/></svg>
<div style="left:1318.6px;top:48.8px;width:36.2px;height:26.4px;background:#4d4d4d;"></div>
<svg style="left:1318.6px;top:49px;" width="36" height="26.3" viewBox="0 0 36 26.3"><circle cx="11.6" cy="5.9" r="1.9" fill="none" stroke="#8a8a8a" stroke-width="1.3"/><circle cx="23.6" cy="19.6" r="1.9" fill="none" stroke="#8a8a8a" stroke-width="1.3"/><path d="M11.6 8V15Q11.6 17.4 14 17.4H16" fill="none" stroke="#8a8a8a" stroke-width="1.9"/><path d="M15.4 14.2L19.4 17.4L15.4 20.8Z" fill="#8a8a8a"/><path d="M23.6 17.5V10.4Q23.6 8 21.2 8H19.4" fill="none" stroke="#8a8a8a" stroke-width="1.9"/><path d="M20 4.7L16 8L20 11.4Z" fill="#8a8a8a"/></svg>
<div style="left:1393.3px;top:48.8px;width:36.2px;height:27.2px;background:#4d4d4d;"></div>
<svg style="left:1393.3px;top:49px;" width="36" height="26.3" viewBox="0 0 36 26.3"><rect x="7.6" y="2.2" width="21.6" height="21.3" rx="1" fill="#434343" stroke="#e0e0e0" stroke-width="1.3"/><path d="M10 7.6H27.6" stroke="#e8e8e8" stroke-width="1"/><rect x="13" y="8" width="5.4" height="9.4" fill="#fff"/><rect x="20" y="8" width="5.6" height="6.2" fill="#fff"/><rect x="22" y="15.6" width="3.8" height="4.4" fill="#fff"/><path d="M25.6 8V19" stroke="#fff" stroke-width="1"/><path d="M11 8.6V12.6" stroke="#fff" stroke-width="1.6"/></svg>
<div style="left:1432.5px;top:48.8px;width:36.2px;height:27.2px;background:#4d4d4d;"></div>
<svg style="left:1432.5px;top:49px;" width="36" height="26.3" viewBox="0 0 36 26.3"><rect x="7.8" y="2.2" width="21.6" height="21.3" rx="1" fill="#434343" stroke="#e0e0e0" stroke-width="1.3"/><rect x="11.8" y="7" width="13.6" height="13.4" rx="3.2" fill="#fff"/><path d="M17.6 13.6H23.2L20.8 17.2H15.4Z" fill="#2a2a2a"/><path d="M17 11.2H22M15.4 13.6V16" stroke="#b0b0b0" stroke-width="0.9"/></svg>
<div style="left:1471.7px;top:48.8px;width:36.2px;height:27.2px;background:#4d4d4d;"></div>
<svg style="left:1471.7px;top:49px;" width="36" height="26.3" viewBox="0 0 36 26.3"><rect x="7.6" y="2.2" width="21.6" height="21.3" rx="1" fill="#434343" stroke="#c4c4c4" stroke-width="1.3"/><path d="M13 6.8H20L22 8.8V21H11.4V8.4Z" fill="none" stroke="#9a9a9a" stroke-width="1"/><path d="M13 11H16M13 14H15.4M13 17H17M13 19H19" stroke="#9a9a9a" stroke-width="0.9"/><circle cx="19.6" cy="13.2" r="3.3" fill="#505050" stroke="#c8c8c8" stroke-width="1.1"/><path d="M22 15.8L25 19" stroke="#d8d8d8" stroke-width="1.6"/></svg>
<div style="left:1546.7px;top:48.8px;width:36.2px;height:26.4px;background:#4a7fae;"></div>
<svg style="left:1546.7px;top:49px;" width="36" height="26.3" viewBox="0 0 36 26.3"><rect x="9.1" y="7" width="7.6" height="12" fill="#fff"/><circle cx="20.7" cy="10.7" r="6.9" fill="#fff" stroke="#4a7fae" stroke-width="1.5"/><circle cx="20.7" cy="10.7" r="6.5" fill="#fff"/><path d="M20.8 8.4L28.6 22.8H13Z" fill="#fff" stroke="#4a7fae" stroke-width="1.7"/><path d="M20.8 11.4L27 22.2H14.6Z" fill="#fff"/></svg>
<div style="left:1585.9px;top:48.8px;width:36.2px;height:26.4px;background:#4d4d4d;"></div>
<svg style="left:1585.9px;top:49px;" width="36" height="26.3" viewBox="0 0 36 26.3"><circle cx="17.8" cy="11.7" r="8.5" fill="none" stroke="#c8c8c8" stroke-width="0.9"/><path d="M27.8 9.8V21.8H15.4Q25 20 27.8 9.8Z" fill="#9a9a9a"/><path d="M16 21.4H27.6M27.4 10V21" stroke="#d0d0d0" stroke-width="0.9" stroke-dasharray="1 1"/></svg>
<div style="left:1625.1px;top:48.8px;width:36.2px;height:26.4px;background:#4d4d4d;"></div>
<svg style="left:1625.1px;top:49px;" width="36" height="26.3" viewBox="0 0 36 26.3"><path d="M19.6 6H13.2Q10.4 6 10.4 8.8V17.6Q10.4 20.4 13.2 20.4H22Q24.8 20.4 24.8 17.6V12.4" fill="none" stroke="#fff" stroke-width="2"/><path d="M27 4.2L16.8 14.2M16.6 9.4V14.6H22.2" fill="none" stroke="#fff" stroke-width="1.9"/></svg>
<div style="left:1700.7px;top:48.8px;width:36.2px;height:26.4px;background:#4d4d4d;"></div>
<svg style="left:1700.7px;top:49px;" width="36" height="26.3" viewBox="0 0 36 26.3"><rect x="9.8" y="4.6" width="17" height="11.8" rx="2.2" fill="none" stroke="#e0e0e0" stroke-width="1.1"/><path d="M10.6 5.4L26 15.6M26 5.4L10.6 15.6" stroke="#e0e0e0" stroke-width="1"/><path d="M10.8 18.2H25.8M10.8 19.6H25.8M10.8 20.9H25.8" stroke="#c0c0c0" stroke-width="0.8"/></svg>
<div style="left:1739.9px;top:48.8px;width:36.2px;height:26.4px;background:#4d4d4d;"></div>
<svg style="left:1739.9px;top:49px;" width="36" height="26.3" viewBox="0 0 36 26.3"><rect x="9.3" y="4.1" width="17.4" height="17.8" rx="0.8" fill="#5a5a5a" stroke="#f0f0f0" stroke-width="1.1"/><path d="M26.4 7L12.6 21.6H26.4Z" fill="#6e6e6e"/><path d="M12.4 4.4V21M15.4 4.4V17M18.4 4.4V14M21.4 4.4V11M24.2 4.4V8M9.6 7H26M9.6 10H22M9.6 13H19.4M9.6 16H16.4M9.6 19H13.4" stroke="#f0f0f0" stroke-width="1"/><path d="M24 10.5h0.1M22 13.5h0.1M25 13.5h0.1M19 16.5h0.1M22 16.5h0.1M25 16.5h0.1M16 19.5h0.1M19 19.5h0.1M22 19.5h0.1M25 19.5h0.1M20.5 15h0.1M23.5 15h0.1M17.5 18h0.1M20.5 18h0.1M23.5 18h0.1M23.5 12h0.1" stroke="#e0e0e0" stroke-width="1" stroke-linecap="round"/></svg>
<div style="left:1779.1px;top:48.8px;width:36.2px;height:26.4px;background:#4a7fae;"></div>
<svg style="left:1779.1px;top:49px;" width="36" height="26.3" viewBox="0 0 36 26.3"><circle cx="20.6" cy="12.3" r="6.7" fill="none" stroke="#fff" stroke-width="1.1" stroke-dasharray="2.4 1.4"/><circle cx="15.4" cy="12.8" r="6.9" fill="#fff"/></svg>
<div style="left:1818.3px;top:48.8px;width:36.2px;height:26.4px;background:#4a7fae;"></div>
<svg style="left:1818.3px;top:49px;" width="36" height="26.3" viewBox="0 0 36 26.3"><circle cx="17.9" cy="12.6" r="9.1" fill="none" stroke="#fff" stroke-width="1.1"/><circle cx="16.1" cy="10.9" r="1.7" fill="#fff"/><path d="M12.6 16.7H21.5M21.5 7.6V16.7" stroke="#e8e8e8" stroke-width="1" stroke-dasharray="1.6 0.9"/></svg>
<div style="left:1857.5px;top:48.8px;width:36.2px;height:26.4px;background:#4d4d4d;"></div>
<svg style="left:1857.5px;top:49px;" width="36" height="26.3" viewBox="0 0 36 26.3"><rect x="8" y="2.9" width="20.2" height="19.7" rx="0.8" fill="#434343" stroke="#fff" stroke-width="1.4"/><circle cx="16.1" cy="11.7" r="2.8" fill="#fff"/><path d="M11.6 20.2H25V7" fill="none" stroke="#c8c8c8" stroke-width="1.5"/></svg>
<span style="left:141.8px;top:92px;font-size:13.6px;line-height:15px;color:#ffffff;letter-spacing:-0.27px;">{Ellipse}</span>
<div style="left:203px;top:91.5px;width:2px;height:15.5px;background:#1a1a1a;"></div>
<div style="left:231px;top:86px;width:26.8px;height:26.4px;background:#4a7fae;"></div>
<div style="left:386.6px;top:90.2px;width:2px;height:18.4px;background:#1a1a1a;"></div>
<div style="left:430px;top:88px;width:58px;height:22.6px;background:#262626;"></div>
<span style="left:433.45px;top:93px;font-size:13.6px;line-height:15px;color:#ffffff;letter-spacing:0.13px;">1.0 px</span>
<div style="left:488px;top:88.2px;width:16.2px;height:21.2px;background:#3f3f3f;border-radius:2px;"></div>
<span style="left:536.55px;top:93px;font-size:13.8px;line-height:15px;color:#ffffff;letter-spacing:-0.21px;">Shape</span>
<div style="left:581px;top:88px;width:111.7px;height:22.6px;background:#4d4d4d;"></div>
<span style="left:586.3px;top:92px;font-size:13.8px;line-height:15px;color:#ffffff;letter-spacing:0.07px;">Custom</span>
<span style="left:754.3px;top:93px;font-size:13.8px;line-height:15px;color:#7a7a7a;letter-spacing:-0.4px;">Gap</span>
<div style="left:787px;top:88px;width:81px;height:22.6px;background:#262626;"></div>
<span style="left:790.3px;top:93px;font-size:13.6px;line-height:15px;color:#787878;letter-spacing:-0.05px;">226.6 px</span>
<div style="left:868px;top:88px;width:16px;height:22.6px;background:#3c3c3c;"></div>
<span style="left:903px;top:93px;font-size:13.8px;line-height:15px;color:#ffffff;letter-spacing:0.31px;">Count</span>
<div style="left:948px;top:88px;width:57.3px;height:22.6px;background:#262626;"></div>
<span style="left:951.45px;top:93px;font-size:13.6px;line-height:15px;color:#ffffff;">1</span>
<div style="left:1005.2px;top:88.2px;width:16.6px;height:21.2px;background:#3f3f3f;border-radius:2px;"></div>
<div style="left:1072.7px;top:90px;width:27.6px;height:18.4px;background:#4d4d4d;"></div>
<div style="left:1115.8px;top:92.2px;width:2px;height:14px;background:#161616;"></div>
<span style="left:1166.15px;top:93px;font-size:13.8px;line-height:15px;color:#ffffff;letter-spacing:0.38px;">Fill</span>
<div style="left:1190px;top:85px;width:78.3px;height:28px;background:#5a5a5a;"></div>
<div style="left:1193.5px;top:88.7px;width:71px;height:21.3px;background:#d6d6d6;box-shadow:0 0 0 1px #6a6a6a;"></div>
<span style="left:1295.35px;top:93px;font-size:13.8px;line-height:15px;color:#ffffff;letter-spacing:-0.06px;">Stroke</span>
<div style="left:1340px;top:85px;width:77.7px;height:28px;background:#5a5a5a;"></div>
<div style="left:1344.3px;top:88.7px;width:69.3px;height:20.5px;background:#000000;box-shadow:0 0 0 1px #777;"></div>
<div style="left:1431px;top:88px;width:77.7px;height:22.6px;background:#262626;"></div>
<span style="left:1433.85px;top:93px;font-size:13.8px;line-height:15px;color:#ffffff;letter-spacing:0.21px;">Hairline</span>
<div style="left:1509px;top:88px;width:16.3px;height:22.6px;background:#4a4a4a;"></div>
<div style="left:1526.3px;top:88px;width:17.8px;height:22.6px;background:#4a4a4a;"></div>
<div style="left:1546.9px;top:88px;width:22.6px;height:22.6px;background:#464646;"></div>
<div style="left:1585px;top:89px;width:2px;height:21px;background:#1a1a1a;"></div>
<div style="left:1822.7px;top:90px;width:27.4px;height:18.4px;background:#4d4d4d;"></div>
<div style="left:1863.2px;top:94px;width:1.6px;height:9.5px;background:#111;"></div>
<svg style="left:0px;top:0px;" width="1920" height="118" viewBox="0 0 1920 118"><path d="M239.80 90.90L239.80 105.50L243.40 102.40L246.30 108.70L248.60 107.60L245.80 101.60L250.90 100.80Z" fill="#e8e8e8"/><rect x="274.6" y="90.3" width="14" height="13" rx="2.4" fill="none" stroke="#c8c8c8" stroke-width="1.4"/><path d="M282.30 95.30L282.30 108.00L285.43 105.30L287.95 110.79L289.96 109.83L287.52 104.61L291.96 103.91Z" fill="#e8e8e8" stroke="#333" stroke-width="0.8"/><path d="M313 99C312 93 317 89.8 322 89.8C327.5 89.8 331 93.4 330.2 98C329.6 101.6 326.4 102.8 324 102.4L321 108Q316 110.4 313.4 106Z" fill="#8a8a8a"/><ellipse cx="317.7" cy="102.6" rx="4.9" ry="6.4" fill="#7c7c7c" stroke="#d0d0d0" stroke-width="1"/><path d="M324.20 96.60L324.20 107.11L326.79 104.88L328.88 109.42L330.54 108.62L328.52 104.30L332.19 103.73Z" fill="#f0f0f0" stroke="#333" stroke-width="0.8"/><rect x="351.6" y="90.6" width="14.2" height="14.3" fill="none" stroke="#c0c0c0" stroke-width="0.9" stroke-dasharray="2 1"/><rect x="354.6" y="93.6" width="9" height="8.7" fill="#6a6a6a" stroke="#c4c4c4" stroke-width="1.8"/><circle cx="351.6" cy="90.6" r="1.25" fill="#444" stroke="#d0d0d0" stroke-width="0.8"/><circle cx="365.8" cy="90.6" r="1.25" fill="#444" stroke="#d0d0d0" stroke-width="0.8"/><circle cx="351.6" cy="104.9" r="1.25" fill="#444" stroke="#d0d0d0" stroke-width="0.8"/><circle cx="365.8" cy="104.9" r="1.25" fill="#444" stroke="#d0d0d0" stroke-width="0.8"/><path d="M365.6 104.2L370 105.8L367.4 106.6L366.6 109Z" fill="#444" stroke="#c8c8c8" stroke-width="0.8"/><rect x="410.8" y="98.1" width="5.5" height="5.4" fill="none" stroke="#d0d0d0" stroke-width="1.3"/><path d="M413.50 93.40L411.20 96.30L415.80 96.30Z" fill="#fff"/><path d="M413.50 108.10L411.20 105.20L415.80 105.20Z" fill="#fff"/><path d="M406.2 100.8L409.1 98.5V103.1Z" fill="#fff"/><path d="M420.8 100.8L417.9 98.5V103.1Z" fill="#fff"/><path d="M496.00 89.80L493.00 95.40L499.00 95.40Z" fill="#dcdcdc"/><path d="M496.00 107.90L493.00 102.30L499.00 102.30Z" fill="#dcdcdc"/><path d="M1013.50 89.80L1010.50 95.40L1016.50 95.40Z" fill="#dcdcdc"/><path d="M1013.50 107.90L1010.50 102.30L1016.50 102.30Z" fill="#dcdcdc"/><path d="M871.6 96.7L876.0 92.5L880.4 96.7M871.6 101.3L876.0 105.5L880.4 101.3" fill="none" stroke="#8c8c8c" stroke-width="1.2"/><path d="M1512.9 96.7L1517.3 92.5L1521.7 96.7M1512.9 101.3L1517.3 105.5L1521.7 101.3" fill="none" stroke="#e0e0e0" stroke-width="1.2"/><path d="M673.5 95.6L681 102.6L688.5 95.6" fill="none" stroke="#e8e8e8" stroke-width="1.7"/><path d="M1040.6 90.6C1050 92 1057 98 1058.6 108.6" fill="none" stroke="#e8e8e8" stroke-width="1.3"/><path d="M1040.6 97.8C1046 99 1050.4 103 1051.6 108.6" fill="none" stroke="#e8e8e8" stroke-width="1.3"/><circle cx="1046.4" cy="92.2" r="1.3" fill="#444" stroke="#e8e8e8" stroke-width="0.8"/><circle cx="1057.2" cy="102.6" r="1.3" fill="#444" stroke="#e8e8e8" stroke-width="0.8"/><circle cx="1044.4" cy="99.2" r="1.3" fill="#444" stroke="#e8e8e8" stroke-width="0.8"/><circle cx="1050.6" cy="104.6" r="1.3" fill="#444" stroke="#e8e8e8" stroke-width="0.8"/><circle cx="1079.70" cy="99.4" r="2.15" fill="#fff"/><circle cx="1086.75" cy="99.4" r="2.15" fill="#fff"/><circle cx="1093.80" cy="99.4" r="2.15" fill="#fff"/><circle cx="1829.60" cy="99.4" r="2.15" fill="#fff"/><circle cx="1836.65" cy="99.4" r="2.15" fill="#fff"/><circle cx="1843.70" cy="99.4" r="2.15" fill="#fff"/><path d="M1265.5 105V111.2H1259.3Z" fill="#b8b8b8"/><path d="M1415.2 105.4V111.6H1409Z" fill="#b8b8b8"/><path d="M1529.7 97.4H1540.6L1535.1 102.9Z" fill="#fff"/><path d="M1549.2 92.9H1567.2M1549.2 99.5H1567.2M1549.2 106H1567.2" stroke="#fff" stroke-width="1.2"/><circle cx="1553.1" cy="92.9" r="2.2" fill="#464646" stroke="#fff" stroke-width="1.2"/><circle cx="1562" cy="99.5" r="2.2" fill="#464646" stroke="#fff" stroke-width="1.2"/><circle cx="1554.7" cy="106" r="2.2" fill="#464646" stroke="#fff" stroke-width="1.2"/><rect x="1607.50" y="92.20" width="8.10" height="3.90" fill="#8c8c8c"/><rect x="1607.50" y="99.50" width="15.40" height="7.30" fill="#8c8c8c"/><rect x="1635.10" y="92.20" width="9.70" height="3.90" fill="#8c8c8c"/><rect x="1631.50" y="99.50" width="16.60" height="7.30" fill="#8c8c8c"/><rect x="1664.00" y="92.20" width="9.00" height="3.90" fill="#8c8c8c"/><rect x="1657.00" y="99.50" width="16.00" height="7.30" fill="#8c8c8c"/><rect x="1691.40" y="92.20" width="6.70" height="3.90" fill="#8c8c8c"/><rect x="1680.90" y="99.50" width="9.10" height="7.30" fill="#8c8c8c"/><rect x="1713.00" y="91.90" width="7.00" height="14.90" fill="#8c8c8c"/><rect x="1722.90" y="91.90" width="4.90" height="9.40" fill="#8c8c8c"/><rect x="1739.00" y="90.90" width="6.80" height="15.10" fill="#8c8c8c"/><rect x="1748.40" y="93.30" width="4.60" height="10.10" fill="#8c8c8c"/><rect x="1764.00" y="92.20" width="6.80" height="14.80" fill="#8c8c8c"/><rect x="1773.10" y="97.10" width="4.90" height="9.90" fill="#8c8c8c"/><rect x="1789.00" y="100.00" width="7.00" height="8.50" fill="#8c8c8c"/><rect x="1797.00" y="90.00" width="6.60" height="9.20" fill="#8c8c8c"/><path d="M1606.5 90.1V108.9M1639.8 90.1V108.9M1673.6 90.1V108.9M1690.6 90.1V108.9M1711.1 91.4H1729.9M1736.1 98.5H1754.9M1761.7 107.5H1780.2M1787.2 99.5H1805" stroke="#f0f0f0" stroke-width="1.3"/></svg>
<div style="left:0px;top:118px;width:47px;height:962px;background:#1e1e1e;"></div>
<div style="left:2px;top:120.6px;width:43px;height:955.4px;background:#333333;"></div>
<div style="left:6.8px;top:150.7px;width:31.7px;height:31.8px;background:#4a7fae;"></div>
<div style="left:6.8px;top:302.5px;width:31.4px;height:31px;background:#262626;"></div>
<svg style="left:0px;top:0px;" width="1920" height="1080" viewBox="0 0 1920 1080"><circle cx="14" cy="132.5" r="8" fill="#7a7a7a"/><path d="M10.5 129l7 7m0 -7l-7 7" stroke="#1e1e1e" stroke-width="1.3" fill="none"/><path d="M9 343.6H36.4" stroke="#0c0c0c" stroke-width="1.5"/><path d="M9 344.9H36.4" stroke="#4a4a4a" stroke-width="0.9"/><path d="M9 545.6H36.4" stroke="#0c0c0c" stroke-width="1.5"/><path d="M9 546.9H36.4" stroke="#4a4a4a" stroke-width="0.9"/><path d="M9 710.2H36.4" stroke="#0c0c0c" stroke-width="1.5"/><path d="M9 711.5H36.4" stroke="#4a4a4a" stroke-width="0.9"/><path d="M9 951.2H36.4" stroke="#0c0c0c" stroke-width="1.5"/><path d="M9 952.5H36.4" stroke="#4a4a4a" stroke-width="0.9"/><path d="M30 256.5H37V249.5Z" fill="#b4b4b4"/><path d="M30 294.5H37V287.5Z" fill="#b4b4b4"/><path d="M30 332.5H37V325.5Z" fill="#b4b4b4"/><path d="M30 382.5H37V375.5Z" fill="#b4b4b4"/><path d="M30 420.5H37V413.5Z" fill="#b4b4b4"/><path d="M30 458.5H37V451.5Z" fill="#b4b4b4"/><path d="M30 496.5H37V489.5Z" fill="#b4b4b4"/><path d="M30 534.5H37V527.5Z" fill="#b4b4b4"/><path d="M30 585.5H37V578.5Z" fill="#b4b4b4"/><path d="M30 623.5H37V616.5Z" fill="#b4b4b4"/><path d="M30 661.5H37V654.5Z" fill="#b4b4b4"/><path d="M30 699.5H37V692.5Z" fill="#b4b4b4"/><path d="M30 749.5H37V742.5Z" fill="#b4b4b4"/><path d="M30 787.5H37V780.5Z" fill="#b4b4b4"/><path d="M30 825.5H37V818.5Z" fill="#b4b4b4"/><path d="M30 900.5H37V893.5Z" fill="#b4b4b4"/><path d="M30 938.5H37V931.5Z" fill="#b4b4b4"/><path d="M30 989.5H37V982.5Z" fill="#b4b4b4"/><path d="M30 1027.5H37V1020.5Z" fill="#b4b4b4"/><path d="M30 1065.5H37V1058.5Z" fill="#b4b4b4"/><path d="M17.5 156.2L17.5 173.5L21.6 170L24.6 177.3L27.5 176L24.6 169.4L29.8 168.7Z" fill="#e8e8e8"/><path d="M15.2 211.5C15.6 206 17 203 19 200.8C21.5 198.6 25 197.6 29.7 197.3" fill="none" stroke="#e4e4e4" stroke-width="1.3"/><rect x="13.6" y="209.9" width="3.3" height="3.3" fill="#e4e4e4"/><rect x="28.1" y="195.7" width="3.3" height="3.3" fill="#e4e4e4"/><rect x="17" y="199" width="4" height="4" fill="#e4e4e4"/><path d="M19.4 201.4L28 206.4L24.6 210.4Z" fill="#e4e4e4"/><path d="M15.6 232C15.2 236 18 241 22.8 246.6L24.4 244.4C21.4 240 18.4 235.6 15.6 232Z" fill="#ececec"/><path d="M29.2 232C29.6 236 26.8 241 22 246.6L20.4 244.4C23.4 240 26.4 235.6 29.2 232Z" fill="#ececec"/><circle cx="22.4" cy="244.3" r="2" fill="#d8d8d8"/><circle cx="17.6" cy="249.4" r="2.7" fill="none" stroke="#ececec" stroke-width="1.9"/><circle cx="27" cy="249.4" r="2.7" fill="none" stroke="#ececec" stroke-width="1.9"/><path d="M17.2 283L23 289A5.3 5.3 0 0 0 30.4 281.6L24.6 275.8" fill="none" stroke="#e4e4e4" stroke-width="4"/><path d="M11.6 275.4L13.6 277.6L14 276L15.6 279.4M17.6 269.4L19.6 271.6L20 270L21.6 273.4" fill="none" stroke="#f0f0f0" stroke-width="1.2"/><rect x="12.6" y="310.2" width="20" height="16.6" fill="none" stroke="#ececec" stroke-width="1.8" stroke-dasharray="3.6 1.8"/><path d="M32.6 358.2L20.6 370.6L18.4 368.6L31.2 357.6Q32.6 357 32.6 358.2Z" fill="#ececec"/><path d="M18.2 369.4L20 371.2C19.6 375.6 15.6 378 11.4 378.6C13.6 376.4 13.8 372.2 18.2 369.4Z" fill="#ececec"/><ellipse cx="22.5" cy="406.5" rx="10.7" ry="8.9" fill="#787878" stroke="#f0f0f0" stroke-width="1.3"/><circle cx="25.4" cy="481.2" r="7.3" fill="#787878" stroke="#dcdcdc" stroke-width="1"/><rect x="11.3" y="476.2" width="10.8" height="13.6" fill="#787878" stroke="#dcdcdc" stroke-width="1"/><path d="M17.4 478L33.4 484L27.6 487.6L24.6 495L22 494Z" fill="#333"/><path d="M18.5 479.2L31.4 483.9L26.2 486.4L23.4 492.6Z" fill="#ececec" stroke="#222" stroke-width="0.9"/><path d="M11.6 530.4C13 522 19 514 33.2 509.6C32.6 518 27.6 524.4 13.6 530.6Z" fill="#9a9a9a" stroke="#ececec" stroke-width="1"/><path d="M17 513.6L29 526.6" stroke="#ececec" stroke-width="1"/><rect x="15.7" y="512.1" width="2.6" height="2.6" fill="#555" stroke="#f0f0f0" stroke-width="0.8"/><rect x="21.7" y="518.7" width="2.6" height="2.6" fill="#555" stroke="#f0f0f0" stroke-width="0.8"/><rect x="27.7" y="525.3" width="2.6" height="2.6" fill="#555" stroke="#f0f0f0" stroke-width="0.8"/><defs><pattern id="mesh" width="2" height="2" patternUnits="userSpaceOnUse"><rect width="2" height="2" fill="#4c4c4c"/><path d="M0 0.5H2M0.5 0V2" stroke="#9c9c9c" stroke-width="0.6"/></pattern></defs><path d="M11 563C15 561 19 563 22.4 567C26 563 30 562 34 564C33 568 32 571 33.6 575C32 578 32.6 580 32 581.6C26 580 20 581 14.6 582C17 577 15 573 11 563Z" fill="url(#mesh)"/><path d="M32.8 562L27 569.4" stroke="#fff" stroke-width="2.4" stroke-linecap="round"/><circle cx="24" cy="572.4" r="1.8" fill="#fff"/><defs><radialGradient id="gd"><stop offset="0" stop-color="#bcbcbc"/><stop offset="1" stop-color="#bcbcbc" stop-opacity="0"/></radialGradient></defs><path d="M12 602.6Q23 600 33 600.6V616Q23 616.4 12 617.6Z" fill="#787878" stroke="#d4d4d4" stroke-width="1.2"/><circle cx="16.2" cy="613.6" r="3.5" fill="url(#gd)"/><circle cx="26.8" cy="603.8" r="3.5" fill="url(#gd)"/><path d="M16.2 613.8L26.8 603.6" stroke="#b0b0b0" stroke-width="0.7" stroke-dasharray="1.2 0.8"/><path d="M13 640.4q1 -1.6 2 0q1 1.6 2 0q1 -1.6 2 0q1 1.6 2 0q1 -1.6 2 0q1 1.6 2 0q1 -1.6 2 0q1 1.6 2 0q1 -1.6 2 0q1 1.6 2 0q1.4 1.2 0 2.4q-1.4 1.2 0 2.4q1.4 1.2 0 2.4q-1.4 1.2 0 2.4q1.4 1.2 0 2.4q-1.4 1 0 2q-1 1.6 -2 0q-1 -1.6 -2 0q-1 1.6 -2 0q-1 -1.6 -2 0q-1 1.6 -2 0q-1 -1.6 -2 0q-1 1.6 -2 0q-1 -1.6 -2 0q-1 1.6 -2 0q-1 -1.6 -2 0q-1.4 -1.2 0 -2.4q1.4 -1.2 0 -2.4q-1.4 -1.2 0 -2.4q1.4 -1.2 0 -2.4q-1.4 -1.2 0 -2.4Z" fill="#787878" stroke="#e4e4e4" stroke-width="0.9"/><path d="M11 682Q22.5 675 34 682L28.4 690.6Q22.5 687.6 17 690.6Z" fill="none" stroke="#e4e4e4" stroke-width="0.9"/><path d="M13 684.8Q22.5 678.6 32 684.8M15 687.8Q22.5 682.6 30 687.8M16.6 680L20 689M28.4 680L25 689M13.6 681L18.4 690M31.4 681L26.6 690" fill="none" stroke="#e4e4e4" stroke-width="0.8"/><path d="M22.5 678.4V689.4" stroke="#fff" stroke-width="1.3"/><defs><linearGradient id="gg" x1="0" x2="1" y1="0" y2="0"><stop offset="0" stop-color="#f4f4f4"/><stop offset="0.25" stop-color="#a8a8a8"/><stop offset="1" stop-color="#606060"/></linearGradient></defs><rect x="11" y="724" width="16" height="23" fill="url(#gg)"/><path d="M15.4 724V747M20.6 724V747M11 730.2H27M11 735.8H27M11 741.4H27" stroke="#c8c8c8" stroke-width="0.8" opacity="0.6"/><circle cx="15.4" cy="730.2" r="1" fill="#f0f0f0"/><circle cx="20.6" cy="730.2" r="1" fill="#f0f0f0"/><circle cx="15.4" cy="735.8" r="1" fill="#f0f0f0"/><circle cx="20.6" cy="735.8" r="1" fill="#f0f0f0"/><circle cx="15.4" cy="741.4" r="1" fill="#f0f0f0"/><circle cx="20.6" cy="741.4" r="1" fill="#f0f0f0"/><rect x="12.2" y="763.8" width="21.2" height="18.6" fill="#5a5a5a" stroke="#e4e4e4" stroke-width="1.4"/><path d="M13.6 764.6C15 768 17 775 21.4 782M12.4 766C18 769.6 26 773 33 773.2M12.6 778.4C18 775.2 26 774 33 774.6M27.6 764C26.6 770 27 777 27.8 782" fill="none" stroke="#e4e4e4" stroke-width="1"/><rect x="11.6" y="800.5" width="6.4" height="2.2" fill="#f0f0f0"/><rect x="19.4" y="800.5" width="6.2" height="2.2" fill="#f0f0f0"/><rect x="27" y="800.5" width="6.4" height="2.2" fill="#f0f0f0"/><rect x="11.6" y="803.7" width="2.4" height="2.2" fill="#f0f0f0"/><rect x="15.4" y="803.7" width="6.2" height="2.2" fill="#f0f0f0"/><rect x="23" y="803.7" width="6.4" height="2.2" fill="#f0f0f0"/><rect x="30.8" y="803.7" width="2.6" height="2.2" fill="#f0f0f0"/><rect x="11.6" y="807" width="6.4" height="2.2" fill="#f0f0f0"/><rect x="19.4" y="807" width="6.2" height="2.2" fill="#f0f0f0"/><rect x="27" y="807" width="6.4" height="2.2" fill="#f0f0f0"/><rect x="11.6" y="810.3" width="2.4" height="2.2" fill="#f0f0f0"/><rect x="15.4" y="810.3" width="6.2" height="2.2" fill="#f0f0f0"/><rect x="23" y="810.3" width="6.4" height="2.2" fill="#f0f0f0"/><rect x="30.8" y="810.3" width="2.6" height="2.2" fill="#f0f0f0"/><rect x="11.6" y="813.5" width="6.4" height="2.2" fill="#f0f0f0"/><rect x="19.4" y="813.5" width="6.2" height="2.2" fill="#f0f0f0"/><rect x="27" y="813.5" width="6.4" height="2.2" fill="#f0f0f0"/><rect x="11.6" y="816.8" width="2.4" height="2.2" fill="#f0f0f0"/><rect x="15.4" y="816.8" width="6.2" height="2.2" fill="#f0f0f0"/><rect x="23" y="816.8" width="6.4" height="2.2" fill="#f0f0f0"/><rect x="30.8" y="816.8" width="2.6" height="2.2" fill="#f0f0f0"/><rect x="11.6" y="820" width="6.4" height="2.2" fill="#f0f0f0"/><rect x="19.4" y="820" width="6.2" height="2.2" fill="#f0f0f0"/><rect x="27" y="820" width="6.4" height="2.2" fill="#f0f0f0"/><defs><linearGradient id="bv" x1="0" x2="0" y1="0" y2="1"><stop offset="0" stop-color="#8a8a8a"/><stop offset="1" stop-color="#a4a4a4"/></linearGradient></defs><rect x="11" y="837.8" width="23" height="22.4" rx="5.4" fill="url(#bv)"/><path d="M12.6 839.6L18.6 846V852.6L12.6 858.6Z" fill="#8e8e8e"/><path d="M32.4 839.6L27 846V852.6L32.4 858.6Z" fill="#7c7c7c"/><path d="M12.6 839.4H32.4L27 846H18.6Z" fill="#767676"/><rect x="18.5" y="846" width="8.6" height="6.6" fill="#c4c4c4"/><rect x="11.6" y="876.6" width="13.8" height="13.4" fill="#6e6e6e" stroke="#e4e4e4" stroke-width="1.2"/><rect x="15.6" y="880.6" width="13.4" height="13.4" rx="3" fill="#6e6e6e" stroke="#e4e4e4" stroke-width="1.2"/><circle cx="26.4" cy="891" r="7" fill="#6e6e6e" stroke="#f0f0f0" stroke-width="1.3"/><circle cx="20" cy="919.4" r="4.6" fill="#e4e4e4"/><path d="M17.6 922H22.4L23.4 928H16.6Z" fill="#dcdcdc"/><rect x="13.4" y="927.6" width="13.2" height="4.8" rx="1.6" fill="#e4e4e4"/><rect x="15" y="932.6" width="10" height="2" fill="#bcbcbc"/><circle cx="25" cy="916.4" r="1" fill="#c8c8c8"/><circle cx="27.6" cy="914.6" r="0.9" fill="#c8c8c8"/><circle cx="30" cy="915.6" r="1" fill="#c8c8c8"/><circle cx="26.6" cy="919" r="1" fill="#c8c8c8"/><circle cx="29.4" cy="918.6" r="1.1" fill="#c8c8c8"/><circle cx="32.4" cy="920.2" r="1" fill="#c8c8c8"/><circle cx="28.4" cy="922.4" r="1" fill="#c8c8c8"/><circle cx="30.6" cy="922" r="0.8" fill="#c8c8c8"/><circle cx="28.6" cy="924.6" r="0.9" fill="#c8c8c8"/><circle cx="24.6" cy="921" r="0.8" fill="#c8c8c8"/><circle cx="22" cy="976.6" r="8.2" fill="none" stroke="#7c7c7c" stroke-width="4.4"/><circle cx="22" cy="976.6" r="8.2" fill="none" stroke="#6a6a6a" stroke-width="4.4" stroke-dasharray="0.7 2.52"/><path d="M19 979.6L20 975.6L27 968.4L30 971.4L22.8 978.6Z" fill="#f0f0f0"/><path d="M27 966.6Q30 962.8 33 965.4Q34.8 968.4 31.4 970.8L30 972.6L26 968.4Z" fill="#f0f0f0"/><path d="M17.5 1002V1007M11 1009.3H15.5" stroke="#e4e4e4" stroke-width="1.1"/><path d="M17.5 1009.3H28.6L33 1014V1023H17.5Z" fill="#787878" stroke="#e4e4e4" stroke-width="1.3"/><path d="M28.6 1009.3V1014H33" fill="#9a9a9a" stroke="#e4e4e4" stroke-width="0.8"/><path d="M25 1054.4L32 1061.4" stroke="#f4f4f4" stroke-width="3.2"/><circle cx="19.5" cy="1048.7" r="7.3" fill="#6a6a6a" stroke="#f4f4f4" stroke-width="1.5"/></svg>
<span style="left:12.6px;top:428px;font-family:'Liberation Serif',serif;font-weight:bold;font-size:28.6px;line-height:34px;color:#ececec;-webkit-text-stroke:0.7px #ececec;">T</span>
<div style="left:1565.5px;top:118px;width:354.5px;height:962px;background:#1e1e1e;"></div>
<div style="left:1568px;top:120.6px;width:349px;height:955.4px;background:#333333;"></div>
<div style="left:1568px;top:147.5px;width:1px;height:394px;background:#444;"></div>
<div style="left:1568px;top:573px;width:1px;height:502px;background:#444;"></div>
<div style="left:1916.2px;top:120.6px;width:1px;height:955px;background:#484848;"></div>
<div style="left:1568px;top:1075.2px;width:349px;height:0.9px;background:#484848;"></div>
<div style="left:1569px;top:120.6px;width:347px;height:26.5px;background:#222222;"></div>
<div style="left:1569px;top:146.9px;width:347px;height:1.2px;background:#5a5a5a;"></div>
<div style="left:1618.5px;top:122.2px;width:77.1px;height:26px;background:#333333;border:1px solid #424242;border-bottom:none;box-sizing:border-box;"></div>
<div style="left:1696.6px;top:122.8px;width:74.4px;height:24px;background:#292929;"></div>
<span style="left:1711.15px;top:128px;font-size:13.8px;line-height:15px;color:#a6a6a6;letter-spacing:-0.11px;">Proper</span>
<div style="left:1776.7px;top:122.8px;width:74.3px;height:24px;background:#292929;"></div>
<span style="left:1791.15px;top:128px;font-size:13.8px;line-height:15px;color:#a6a6a6;letter-spacing:-0.02px;">Stroke</span>
<span style="left:1634.9px;top:128px;font-size:13.8px;line-height:15px;color:#ffffff;letter-spacing:0.04px;">Color</span>
<svg style="left:0px;top:0px;" width="1920" height="1080" viewBox="0 0 1920 1080"><circle cx="1586.5" cy="133.9" r="8" fill="#7a7a7a"/><path d="M1583 130.4l7 7m0 -7l-7 7" stroke="#1e1e1e" stroke-width="1.3" fill="none"/><path d="M1604.6 125.6V141.6M1609.4 125.6V141.6" stroke="#5a5a5a" stroke-width="1.2"/><circle cx="1682.5" cy="135.2" r="6.6" fill="#6a6a6a"/><path d="M1679.6 132.3l5.8 5.8m0 -5.8l-5.8 5.8" stroke="#262626" stroke-width="1.2" fill="none"/><path d="M1623.8 134l3.7 -3.5l3.7 3.5M1623.8 136.6l3.7 3.5l3.7 -3.5" fill="none" stroke="#e8e8e8" stroke-width="1.2"/><rect x="1862" y="122.2" width="20.2" height="23" fill="#4d4d4d"/><path d="M1870 130.2v6l5 -3z" fill="#e8e8e8"/><rect x="1891.2" y="124.8" width="17" height="18.6" rx="3" fill="none" stroke="#d8d8d8" stroke-width="1.2"/><path d="M1894.6 129.8h10.4M1894.6 134.1h10.4M1894.6 138.4h10.4" stroke="#d8d8d8" stroke-width="1.3"/></svg>
<svg style="left:0px;top:0px;" width="1920" height="1080" viewBox="0 0 1920 1080"><rect x="1599.2" y="167" width="32.6" height="32.6" fill="#000" stroke="#b4b4b4" stroke-width="1"/><rect x="1607.4" y="175.2" width="16" height="16.4" fill="#333" stroke="#b4b4b4" stroke-width="1"/><rect x="1580.5" y="185.5" width="32.2" height="32.2" fill="#d6d6d6" stroke="#e6e6e6" stroke-width="1"/><path d="M1585 180V175Q1585 171 1589 171H1592" fill="none" stroke="#fff" stroke-width="1.8"/><path d="M1591.6 167.6L1596 171L1591.6 174.4Z" fill="#fff"/><path d="M1581.6 179.4L1585 183.8L1588.4 179.4Z" fill="#fff"/></svg>
<span style="left:1640.85px;top:173px;font-size:13.8px;line-height:15px;color:#fff;">H</span>
<span style="left:1644.65px;top:203px;font-size:13.8px;line-height:15px;color:#fff;">L</span>
<span style="left:1643.35px;top:232px;font-size:13.8px;line-height:15px;color:#fff;">S</span>
<div style="left:1662px;top:175px;width:191.3px;height:8px;background:linear-gradient(to right,#ff0000 0%,#ffff00 8.3%,#ffff00 25%,#00f000 33.3%,#00ffff 41.7%,#00ffff 58.3%,#0000ff 66.7%,#ff00ff 75%,#ff00ff 91.7%,#ff0a3c 100%);border-radius:1px;"></div>
<div style="left:1662px;top:205.3px;width:191.3px;height:8px;background:linear-gradient(to right,#000,#fff);border-radius:1px;"></div>
<div style="left:1662px;top:234.6px;width:191.3px;height:8px;background:linear-gradient(to right,#d6d6d6,#ffa0a0 50%,#ff0000);border-radius:1px;"></div>
<div style="left:1661.4px;top:171.3px;width:15.6px;height:15.6px;background:#d6d6d6;border-radius:50%;"></div>
<div style="left:1802.2px;top:201.5px;width:15.6px;height:15.6px;background:#d6d6d6;border-radius:50%;"></div>
<div style="left:1661.4px;top:231px;width:15.6px;height:15.6px;background:#d6d6d6;border-radius:50%;"></div>
<div style="left:1857.8px;top:166.7px;width:48.2px;height:25.1px;background:#262626;"></div>
<span style="left:1861.45px;top:173px;font-size:13.8px;line-height:15px;color:#fff;">0</span>
<div style="left:1857.8px;top:197px;width:48.2px;height:23.7px;background:#262626;"></div>
<span style="left:1861.4px;top:202px;font-size:13.8px;line-height:15px;color:#fff;">80</span>
<div style="left:1857.8px;top:226.7px;width:48.2px;height:23.7px;background:#262626;"></div>
<span style="left:1861.45px;top:232px;font-size:13.8px;line-height:15px;color:#fff;">0</span>
<svg style="left:0px;top:0px;" width="1920" height="1080" viewBox="0 0 1920 1080"><circle cx="1590.7" cy="274" r="10.4" fill="#444" stroke="#e0e0e0" stroke-width="1"/><path d="M1584.6 280.6L1585.4 277.6L1592 271L1594.4 273.4L1587.8 280Z" fill="none" stroke="#fff" stroke-width="1"/><path d="M1592.4 268.8Q1595 265.4 1597.6 267.6Q1599.4 270 1596.6 272.4L1595.4 273.8L1591.6 270Z" fill="#fff"/><circle cx="1616" cy="274" r="10.4" fill="none" stroke="#e0e0e0" stroke-width="1"/><rect x="1639" y="263.4" width="25" height="21" fill="#fff"/><path d="M1639.4 284L1663.6 263.8" stroke="#f03030" stroke-width="1.2"/><rect x="1667" y="263.6" width="26.8" height="21" fill="#000" stroke="#cfcfcf" stroke-width="1.1"/><rect x="1695.2" y="263.2" width="27.6" height="21.4" fill="#fff"/></svg>
<span style="left:1784.45px;top:267px;font-size:13.8px;line-height:15px;color:#fff;letter-spacing:0.07px;">Hex</span>
<div style="left:1813.8px;top:263px;width:92.2px;height:22px;background:#262626;"></div>
<span style="left:1817.55px;top:267px;font-size:13.6px;line-height:15px;color:#fff;letter-spacing:-1.4px;">#CCCCCC</span>
<div style="left:1646px;top:299.2px;width:195px;height:195px;background:conic-gradient(from 0deg,#ffff33 0deg,#ffff33 60deg,#ff9a1a 75deg,#ff2a14 90deg,#ff2e8a 105deg,#ff33ff 120deg,#ff33ff 180deg,#8a2eff 195deg,#1f2aff 210deg,#0a96ff 225deg,#00ffff 240deg,#00ffff 300deg,#00ff96 315deg,#00ff33 330deg,#86ff33 345deg,#ffff33 360deg);border-radius:50%;"></div>
<div style="left:1665.5px;top:318.7px;width:156px;height:156px;background:#333333;border-radius:50%;"></div>
<div style="left:1694px;top:347px;width:99px;height:2.29px;background:linear-gradient(to right,#000 0%,rgb(114,20,10) 25.25%,rgb(255,45,24) 50.5%,rgb(255,47,25) 100%);"></div>
<div style="left:1694px;top:348.99px;width:99px;height:2.29px;background:linear-gradient(to right,#000 0%,rgb(114,23,13) 25.75%,rgb(255,51,30) 51.5%,rgb(255,54,34) 100%);"></div>
<div style="left:1694px;top:350.98px;width:99px;height:2.29px;background:linear-gradient(to right,#000 0%,rgb(114,25,16) 26.25%,rgb(255,56,35) 52.5%,rgb(255,61,41) 100%);"></div>
<div style="left:1694px;top:352.98px;width:99px;height:2.29px;background:linear-gradient(to right,#000 0%,rgb(114,27,18) 26.75%,rgb(255,60,40) 53.5%,rgb(255,67,47) 100%);"></div>
<div style="left:1694px;top:354.97px;width:99px;height:2.29px;background:linear-gradient(to right,#000 0%,rgb(114,29,20) 27.25%,rgb(255,65,45) 54.5%,rgb(255,73,54) 100%);"></div>
<div style="left:1694px;top:356.96px;width:99px;height:2.29px;background:linear-gradient(to right,#000 0%,rgb(114,31,22) 27.75%,rgb(255,69,50) 55.5%,rgb(255,78,60) 100%);"></div>
<div style="left:1694px;top:358.95px;width:99px;height:2.29px;background:linear-gradient(to right,#000 0%,rgb(114,33,24) 28.25%,rgb(255,73,54) 56.5%,rgb(255,83,65) 100%);"></div>
<div style="left:1694px;top:360.94px;width:99px;height:2.29px;background:linear-gradient(to right,#000 0%,rgb(114,34,26) 28.75%,rgb(255,77,59) 57.5%,rgb(255,88,71) 100%);"></div>
<div style="left:1694px;top:362.94px;width:99px;height:2.29px;background:linear-gradient(to right,#000 0%,rgb(114,36,28) 29.25%,rgb(255,81,63) 58.5%,rgb(255,93,76) 100%);"></div>
<div style="left:1694px;top:364.93px;width:99px;height:2.29px;background:linear-gradient(to right,#000 0%,rgb(114,38,30) 29.75%,rgb(255,85,68) 59.5%,rgb(255,98,82) 100%);"></div>
<div style="left:1694px;top:366.92px;width:99px;height:2.29px;background:linear-gradient(to right,#000 0%,rgb(114,40,32) 30.25%,rgb(255,89,72) 60.5%,rgb(255,103,87) 100%);"></div>
<div style="left:1694px;top:368.91px;width:99px;height:2.29px;background:linear-gradient(to right,#000 0%,rgb(114,42,34) 30.75%,rgb(255,93,76) 61.5%,rgb(255,107,92) 100%);"></div>
<div style="left:1694px;top:370.9px;width:99px;height:2.29px;background:linear-gradient(to right,#000 0%,rgb(114,43,36) 31.25%,rgb(255,97,81) 62.5%,rgb(255,112,97) 100%);"></div>
<div style="left:1694px;top:372.9px;width:99px;height:2.29px;background:linear-gradient(to right,#000 0%,rgb(114,45,38) 31.75%,rgb(255,101,85) 63.5%,rgb(255,116,102) 100%);"></div>
<div style="left:1694px;top:374.89px;width:99px;height:2.29px;background:linear-gradient(to right,#000 0%,rgb(114,47,40) 32.25%,rgb(255,105,89) 64.5%,rgb(255,121,107) 100%);"></div>
<div style="left:1694px;top:376.88px;width:99px;height:2.29px;background:linear-gradient(to right,#000 0%,rgb(114,49,42) 32.75%,rgb(255,109,94) 65.5%,rgb(255,125,112) 100%);"></div>
<div style="left:1694px;top:378.87px;width:99px;height:2.29px;background:linear-gradient(to right,#000 0%,rgb(114,50,44) 33.25%,rgb(255,113,98) 66.5%,rgb(255,129,116) 100%);"></div>
<div style="left:1694px;top:380.86px;width:99px;height:2.29px;background:linear-gradient(to right,#000 0%,rgb(114,52,46) 33.75%,rgb(255,117,102) 67.5%,rgb(255,133,121) 100%);"></div>
<div style="left:1694px;top:382.86px;width:99px;height:2.29px;background:linear-gradient(to right,#000 0%,rgb(114,54,48) 34.25%,rgb(255,121,107) 68.5%,rgb(255,138,126) 100%);"></div>
<div style="left:1694px;top:384.85px;width:99px;height:2.29px;background:linear-gradient(to right,#000 0%,rgb(114,56,50) 34.75%,rgb(255,125,111) 69.5%,rgb(255,142,130) 100%);"></div>
<div style="left:1694px;top:386.84px;width:99px;height:2.29px;background:linear-gradient(to right,#000 0%,rgb(114,58,52) 35.25%,rgb(255,129,116) 70.5%,rgb(255,146,135) 100%);"></div>
<div style="left:1694px;top:388.83px;width:99px;height:2.29px;background:linear-gradient(to right,#000 0%,rgb(114,59,54) 35.75%,rgb(255,133,120) 71.5%,rgb(255,150,139) 100%);"></div>
<div style="left:1694px;top:390.82px;width:99px;height:2.29px;background:linear-gradient(to right,#000 0%,rgb(114,61,56) 36.25%,rgb(255,137,124) 72.5%,rgb(255,154,144) 100%);"></div>
<div style="left:1694px;top:392.82px;width:99px;height:2.29px;background:linear-gradient(to right,#000 0%,rgb(114,63,58) 36.75%,rgb(255,141,129) 73.5%,rgb(255,158,148) 100%);"></div>
<div style="left:1694px;top:394.81px;width:99px;height:2.29px;background:linear-gradient(to right,#000 0%,rgb(114,65,60) 37.25%,rgb(255,145,133) 74.5%,rgb(255,162,152) 100%);"></div>
<div style="left:1694px;top:396.8px;width:99px;height:2.29px;background:linear-gradient(to right,#000 0%,rgb(114,67,62) 37.75%,rgb(255,149,138) 75.5%,rgb(255,166,157) 100%);"></div>
<div style="left:1694px;top:398.79px;width:99px;height:2.29px;background:linear-gradient(to right,#000 0%,rgb(114,68,64) 38.25%,rgb(255,153,142) 76.5%,rgb(255,170,161) 100%);"></div>
<div style="left:1694px;top:400.78px;width:99px;height:2.29px;background:linear-gradient(to right,#000 0%,rgb(114,70,66) 38.75%,rgb(255,157,147) 77.5%,rgb(255,174,165) 100%);"></div>
<div style="left:1694px;top:402.78px;width:99px;height:2.29px;background:linear-gradient(to right,#000 0%,rgb(114,72,68) 39.25%,rgb(255,161,151) 78.5%,rgb(255,177,169) 100%);"></div>
<div style="left:1694px;top:404.77px;width:99px;height:2.29px;background:linear-gradient(to right,#000 0%,rgb(114,74,70) 39.75%,rgb(255,165,156) 79.5%,rgb(255,181,174) 100%);"></div>
<div style="left:1694px;top:406.76px;width:99px;height:2.29px;background:linear-gradient(to right,#000 0%,rgb(114,76,72) 40.25%,rgb(255,169,160) 80.5%,rgb(255,185,178) 100%);"></div>
<div style="left:1694px;top:408.75px;width:99px;height:2.29px;background:linear-gradient(to right,#000 0%,rgb(114,78,74) 40.75%,rgb(255,173,165) 81.5%,rgb(255,189,182) 100%);"></div>
<div style="left:1694px;top:410.74px;width:99px;height:2.29px;background:linear-gradient(to right,#000 0%,rgb(114,80,76) 41.25%,rgb(255,178,170) 82.5%,rgb(255,192,186) 100%);"></div>
<div style="left:1694px;top:412.74px;width:99px;height:2.29px;background:linear-gradient(to right,#000 0%,rgb(114,82,78) 41.75%,rgb(255,182,174) 83.5%,rgb(255,196,190) 100%);"></div>
<div style="left:1694px;top:414.73px;width:99px;height:2.29px;background:linear-gradient(to right,#000 0%,rgb(114,83,80) 42.25%,rgb(255,186,179) 84.5%,rgb(255,200,194) 100%);"></div>
<div style="left:1694px;top:416.72px;width:99px;height:2.29px;background:linear-gradient(to right,#000 0%,rgb(114,85,82) 42.75%,rgb(255,190,184) 85.5%,rgb(255,203,198) 100%);"></div>
<div style="left:1694px;top:418.71px;width:99px;height:2.29px;background:linear-gradient(to right,#000 0%,rgb(114,87,84) 43.25%,rgb(255,195,188) 86.5%,rgb(255,207,202) 100%);"></div>
<div style="left:1694px;top:420.7px;width:99px;height:2.29px;background:linear-gradient(to right,#000 0%,rgb(114,89,87) 43.75%,rgb(255,199,193) 87.5%,rgb(255,211,206) 100%);"></div>
<div style="left:1694px;top:422.7px;width:99px;height:2.29px;background:linear-gradient(to right,#000 0%,rgb(114,91,89) 44.25%,rgb(255,203,198) 88.5%,rgb(255,214,210) 100%);"></div>
<div style="left:1694px;top:424.69px;width:99px;height:2.29px;background:linear-gradient(to right,#000 0%,rgb(114,93,91) 44.75%,rgb(255,208,203) 89.5%,rgb(255,218,214) 100%);"></div>
<div style="left:1694px;top:426.68px;width:99px;height:2.29px;background:linear-gradient(to right,#000 0%,rgb(114,95,93) 45.25%,rgb(255,212,207) 90.5%,rgb(255,221,218) 100%);"></div>
<div style="left:1694px;top:428.67px;width:99px;height:2.29px;background:linear-gradient(to right,#000 0%,rgb(114,97,95) 45.75%,rgb(255,216,212) 91.5%,rgb(255,225,222) 100%);"></div>
<div style="left:1694px;top:430.66px;width:99px;height:2.29px;background:linear-gradient(to right,#000 0%,rgb(114,99,97) 46.25%,rgb(255,221,217) 92.5%,rgb(255,229,226) 100%);"></div>
<div style="left:1694px;top:432.66px;width:99px;height:2.29px;background:linear-gradient(to right,#000 0%,rgb(114,101,100) 46.75%,rgb(255,225,222) 93.5%,rgb(255,232,230) 100%);"></div>
<div style="left:1694px;top:434.65px;width:99px;height:2.29px;background:linear-gradient(to right,#000 0%,rgb(114,103,102) 47.25%,rgb(255,230,227) 94.5%,rgb(255,236,234) 100%);"></div>
<div style="left:1694px;top:436.64px;width:99px;height:2.29px;background:linear-gradient(to right,#000 0%,rgb(114,105,104) 47.75%,rgb(255,234,232) 95.5%,rgb(255,239,237) 100%);"></div>
<div style="left:1694px;top:438.63px;width:99px;height:2.29px;background:linear-gradient(to right,#000 0%,rgb(114,107,106) 48.25%,rgb(255,239,237) 96.5%,rgb(255,242,241) 100%);"></div>
<div style="left:1694px;top:440.62px;width:99px;height:2.29px;background:linear-gradient(to right,#000 0%,rgb(114,109,109) 48.75%,rgb(255,243,242) 97.5%,rgb(255,246,245) 100%);"></div>
<div style="left:1694px;top:442.62px;width:99px;height:2.29px;background:linear-gradient(to right,#000 0%,rgb(114,111,111) 49.25%,rgb(255,248,247) 98.5%,rgb(255,249,249) 100%);"></div>
<div style="left:1694px;top:444.61px;width:99px;height:2.29px;background:linear-gradient(to right,#000 0%,rgb(114,113,113) 49.75%,rgb(255,252,252) 99.5%,rgb(255,253,253) 100%);"></div>
<svg style="left:0px;top:0px;" width="1920" height="1080" viewBox="0 0 1920 1080"><rect x="1826.3" y="395" width="7.2" height="7.2" fill="none" stroke="#3a3a3a" stroke-width="1.3"/><rect x="1827.5" y="396.2" width="4.8" height="4.8" fill="none" stroke="#c4c4c4" stroke-width="0.9"/><rect x="1768.2" y="444.2" width="7.2" height="7.2" fill="#555" stroke="#3a3a3a" stroke-width="1.3"/><rect x="1769.4" y="445.4" width="4.8" height="4.8" fill="none" stroke="#d0d0d0" stroke-width="0.9"/></svg>
<span style="left:1590.35px;top:510px;font-size:13.8px;line-height:15px;color:#fff;letter-spacing:0.12px;">Opacity</span>
<div style="left:1647.5px;top:513px;width:187.5px;height:7.6px;background:#222;border-radius:4px;"></div>
<div style="left:1820.5px;top:509.2px;width:15.6px;height:15.6px;background:#d6d6d6;border-radius:50%;"></div>
<div style="left:1841px;top:505.5px;width:64.5px;height:22.3px;background:#262626;"></div>
<span style="left:1844.25px;top:510px;font-size:13.6px;line-height:15px;color:#fff;letter-spacing:-0.22px;">100.0%</span>
<div style="left:1568px;top:541px;width:349px;height:5px;background:#1e1e1e;"></div>
<div style="left:1568px;top:545.6px;width:349px;height:0.8px;background:#444;"></div>
<div style="left:1569px;top:546px;width:347px;height:26.5px;background:#222222;"></div>
<div style="left:1569px;top:572.3px;width:347px;height:1.2px;background:#5a5a5a;"></div>
<div style="left:1618.3px;top:547.6px;width:82px;height:26px;background:#333333;border:1px solid #424242;border-bottom:none;box-sizing:border-box;"></div>
<div style="left:1702.4px;top:548.2px;width:71.6px;height:24px;background:#292929;"></div>
<span style="left:1716.95px;top:553px;font-size:13.8px;line-height:15px;color:#a6a6a6;letter-spacing:-0.23px;">Appea</span>
<div style="left:1779px;top:548.2px;width:72px;height:24px;background:#292929;"></div>
<span style="left:1794.7px;top:553px;font-size:13.8px;line-height:15px;color:#a6a6a6;letter-spacing:-0.55px;">Transp</span>
<span style="left:1634.35px;top:553px;font-size:13.8px;line-height:15px;color:#ffffff;letter-spacing:-0.43px;">Layers</span>
<svg style="left:0px;top:0px;" width="1920" height="1080" viewBox="0 0 1920 1080"><circle cx="1586.5" cy="559.3" r="8" fill="#7a7a7a"/><path d="M1583 555.8l7 7m0 -7l-7 7" stroke="#1e1e1e" stroke-width="1.3" fill="none"/><path d="M1604.6 551V567M1609.4 551V567" stroke="#5a5a5a" stroke-width="1.2"/><circle cx="1687.8" cy="560.6" r="6.6" fill="#6a6a6a"/><path d="M1684.9 557.7l5.8 5.8m0 -5.8l-5.8 5.8" stroke="#262626" stroke-width="1.2" fill="none"/><rect x="1862" y="547.6" width="20.2" height="23" fill="#4d4d4d"/><path d="M1870 555.6v6l5 -3z" fill="#e8e8e8"/><rect x="1891.2" y="550.2" width="17" height="18.6" rx="3" fill="none" stroke="#d8d8d8" stroke-width="1.2"/><path d="M1894.6 555.2h10.4M1894.6 559.5h10.4M1894.6 563.8h10.4" stroke="#d8d8d8" stroke-width="1.3"/></svg>
<div style="left:1573.8px;top:583.9px;width:323px;height:31px;background:#435266;border-radius:5px;"></div>
<div style="left:1573.8px;top:679.3px;width:323px;height:31px;background:#435266;border-radius:5px;"></div>
<div style="left:1580px;top:587.8px;width:20px;height:22.8px;background:#000;border:1px solid #5a5a5a;box-sizing:border-box;"></div>
<div style="left:1627px;top:587.3px;width:24px;height:23.7px;background:repeating-conic-gradient(#f1f1f1 0% 25%, #d9d9d9 0% 50%) 0 0/11.8px 11.8px;"></div>
<div style="left:1639.3px;top:619.5px;width:23.7px;height:23.5px;background:repeating-conic-gradient(#f1f1f1 0% 25%, #d9d9d9 0% 50%) 0 0/11.8px 11.8px;"></div>
<div style="left:1639.3px;top:651.5px;width:23.7px;height:23.5px;background:repeating-conic-gradient(#f1f1f1 0% 25%, #d9d9d9 0% 50%) 0 0/11.8px 11.8px;"></div>
<div style="left:1639.3px;top:683.3px;width:23.7px;height:23.5px;background:repeating-conic-gradient(#f1f1f1 0% 25%, #d9d9d9 0% 50%) 0 0/11.8px 11.8px;"></div>
<span style="left:1654.35px;top:591px;font-size:13.8px;line-height:15px;color:#fff;letter-spacing:-0.37px;">Layer 1</span>
<span style="left:1667.1px;top:623px;font-size:13.8px;line-height:15px;color:#fff;letter-spacing:-0.51px;">{Path}</span>
<span style="left:1667.1px;top:655px;font-size:13.8px;line-height:15px;color:#fff;letter-spacing:-0.51px;">{Path}</span>
<span style="left:1667.1px;top:687px;font-size:13.8px;line-height:15px;color:#fff;letter-spacing:-0.38px;">{Ellipse}</span>
<svg style="left:0px;top:0px;" width="1920" height="1080" viewBox="0 0 1920 1080"><path d="M1607.2 595.2H1618.2L1612.7 604.4Z" fill="#d0d0d0"/><ellipse cx="1651.2" cy="631.6" rx="9" ry="1.3" fill="#b478ae" opacity="0.9"/><path d="M1642 662.6Q1651 665.6 1660.4 662.6" fill="none" stroke="#b690b2" stroke-width="0.8"/><rect x="1836.7" y="598.1" width="10.2" height="9.2" fill="#fff"/><path d="M1832.4 597V595A3.4 3.4 0 0 1 1839.2 595V598.1" fill="none" stroke="#fff" stroke-width="1.4"/><path d="M1852.5 599.4Q1860 589.2 1867.4 599.4Q1860 609.6 1852.5 599.4Z" fill="none" stroke="#fff" stroke-width="1.1"/><circle cx="1859.9" cy="599.4" r="2.3" fill="none" stroke="#fff" stroke-width="1.1"/><circle cx="1880.4" cy="599.4" r="7" fill="none" stroke="#fff" stroke-width="1.2"/><rect x="1836.7" y="630.1" width="10.2" height="9.2" fill="#fff"/><path d="M1832.4 629V627A3.4 3.4 0 0 1 1839.2 627V630.1" fill="none" stroke="#fff" stroke-width="1.4"/><path d="M1852.5 631.4Q1860 621.2 1867.4 631.4Q1860 641.6 1852.5 631.4Z" fill="none" stroke="#fff" stroke-width="1.1"/><circle cx="1859.9" cy="631.4" r="2.3" fill="none" stroke="#fff" stroke-width="1.1"/><circle cx="1880.4" cy="631.4" r="7" fill="none" stroke="#fff" stroke-width="1.2"/><rect x="1836.7" y="662" width="10.2" height="9.2" fill="#fff"/><path d="M1832.4 660.9V658.9A3.4 3.4 0 0 1 1839.2 658.9V662" fill="none" stroke="#fff" stroke-width="1.4"/><path d="M1852.5 663.3Q1860 653.1 1867.4 663.3Q1860 673.5 1852.5 663.3Z" fill="none" stroke="#fff" stroke-width="1.1"/><circle cx="1859.9" cy="663.3" r="2.3" fill="none" stroke="#fff" stroke-width="1.1"/><circle cx="1880.4" cy="663.3" r="7" fill="none" stroke="#fff" stroke-width="1.2"/><rect x="1836.7" y="693.9" width="10.2" height="9.2" fill="#fff"/><path d="M1832.4 692.8V690.8A3.4 3.4 0 0 1 1839.2 690.8V693.9" fill="none" stroke="#fff" stroke-width="1.4"/><path d="M1852.5 695.2Q1860 685 1867.4 695.2Q1860 705.4 1852.5 695.2Z" fill="none" stroke="#fff" stroke-width="1.1"/><circle cx="1859.9" cy="695.2" r="2.3" fill="none" stroke="#fff" stroke-width="1.1"/><circle cx="1880.4" cy="695.2" r="6.9" fill="none" stroke="#fff" stroke-width="1.7"/><circle cx="1880.4" cy="695.2" r="3.5" fill="#fff"/><path d="M1812.6 626.8H1815L1816.2 625.2H1821L1822.2 626.8H1824.4Q1826 626.8 1826 628.4V636.2Q1826 637.8 1824.4 637.8H1812.6Q1811 637.8 1811 636.2V628.4Q1811 626.8 1812.6 626.8Z" fill="#fff"/><circle cx="1818.5" cy="632.2" r="2.7" fill="#fff" stroke="#2a2a2a" stroke-width="1.9"/></svg>
<div style="left:1900.5px;top:584.5px;width:10.4px;height:402px;background:#8a8a8a;border-radius:5px;"></div>
<div style="left:1573px;top:992.8px;width:339px;height:1px;background:#222;"></div>
<div style="left:1572.8px;top:1000.4px;width:339.5px;height:22.5px;background:#232323;border-radius:7px;"></div>
<svg style="left:0px;top:0px;" width="1920" height="1080" viewBox="0 0 1920 1080"><circle cx="1590.6" cy="1009.3" r="5.4" fill="none" stroke="#fff" stroke-width="1.5"/><path d="M1586.6 1013.4L1581.6 1018.2" stroke="#fff" stroke-width="2.2"/><circle cx="1895" cy="1010.2" r="5.9" fill="none" stroke="#fff" stroke-width="1.5"/><path d="M1899.4 1014.4L1904.2 1018.6" stroke="#fff" stroke-width="1.7"/><path d="M1892.8 1008l4.4 4.4m0 -4.4l-4.4 4.4" stroke="#fff" stroke-width="1.4"/><path d="M1602 1049H1620.5M1602 1057H1620.5" stroke="#a0a0a0" stroke-width="2"/><circle cx="1607.7" cy="1049" r="2.9" fill="#333" stroke="#a0a0a0" stroke-width="1.4"/><circle cx="1614.8" cy="1057" r="2.9" fill="#333" stroke="#a0a0a0" stroke-width="1.4"/><rect x="1640" y="1044.9" width="11.6" height="11" fill="none" stroke="#a0a0a0" stroke-width="1.8"/><rect x="1635.2" y="1050.4" width="11.6" height="11" fill="#333" stroke="#a0a0a0" stroke-width="1.8"/><circle cx="1675.4" cy="1053" r="9.6" fill="#a0a0a0"/><rect x="1670.4" y="1048" width="5.8" height="5.6" fill="#888" stroke="#3a3a3a" stroke-width="1.2" transform="rotate(10 1673 1051)"/><rect x="1674.6" y="1052.4" width="5.6" height="5.4" fill="#999" stroke="#3a3a3a" stroke-width="1.2" transform="rotate(10 1677 1055)"/><rect x="1699.4" y="1044.8" width="16.8" height="16.6" fill="none" stroke="#a0a0a0" stroke-width="1.4"/><rect x="1703.2" y="1050.6" width="6.6" height="6.6" fill="none" stroke="#a0a0a0" stroke-width="1.1"/><rect x="1705.6" y="1048.4" width="6.6" height="6.6" fill="none" stroke="#a0a0a0" stroke-width="1.1"/><circle cx="1699.4" cy="1044.8" r="1.2" fill="#a0a0a0"/><circle cx="1716.2" cy="1044.8" r="1.2" fill="#a0a0a0"/><circle cx="1699.4" cy="1061.4" r="1.2" fill="#a0a0a0"/><circle cx="1716.2" cy="1061.4" r="1.2" fill="#a0a0a0"/><rect x="1736.2" y="1044.8" width="12.2" height="12" fill="none" stroke="#a0a0a0" stroke-width="1.4"/><rect x="1731.8" y="1049.2" width="12.2" height="12" fill="none" stroke="#a0a0a0" stroke-width="1.4"/><circle cx="1736.2" cy="1044.8" r="1.1" fill="#a0a0a0"/><circle cx="1748.4" cy="1044.8" r="1.1" fill="#a0a0a0"/><circle cx="1736.2" cy="1056.8" r="1.1" fill="#a0a0a0"/><circle cx="1748.4" cy="1056.8" r="1.1" fill="#a0a0a0"/><circle cx="1731.8" cy="1049.2" r="1.1" fill="#a0a0a0"/><circle cx="1744" cy="1049.2" r="1.1" fill="#a0a0a0"/><circle cx="1731.8" cy="1061.2" r="1.1" fill="#a0a0a0"/><circle cx="1744" cy="1061.2" r="1.1" fill="#a0a0a0"/><rect x="1762.4" y="1043.5" width="19.4" height="19.2" rx="2" fill="none" stroke="#dcdcdc" stroke-width="1.2"/><path d="M1796.6 1046.4H1799.2L1800.6 1044.2H1807.8L1809.2 1046.4H1811.8Q1813.8 1046.4 1813.8 1048.4V1059.4Q1813.8 1061.4 1811.8 1061.4H1796.6Q1794.6 1061.4 1794.6 1059.4V1048.4Q1794.6 1046.4 1796.6 1046.4Z" fill="#fff"/><circle cx="1804.2" cy="1053.7" r="4.4" fill="#fff" stroke="#2e2e2e" stroke-width="2.6"/><rect x="1831.6" y="1043.3" width="14.9" height="14.6" rx="1.6" fill="#fff"/><rect x="1825.4" y="1047.5" width="16.8" height="16.6" rx="2" fill="#333"/><rect x="1826.2" y="1048.3" width="15.3" height="15.2" rx="1.6" fill="#fff"/><path d="M1829.6 1055.9H1838.2M1833.9 1051.6V1060.2" stroke="#333" stroke-width="1.1"/><rect x="1858.7" y="1043.1" width="19.9" height="20.1" rx="4" fill="#8c8c8c"/><path d="M1863.4 1053.6L1870.6 1050L1875.2 1053L1868 1056.8Z" fill="#333"/><path d="M1863.4 1055.6L1868 1058.8L1875.2 1055" fill="none" stroke="#333" stroke-width="1"/><path d="M1872.6 1047.6V1051.6M1871 1050L1872.6 1051.8L1874.2 1050" fill="none" stroke="#333" stroke-width="0.9"/><path d="M1892.2 1046.6H1909.8M1897.6 1046.4V1044H1904.4V1046.4" fill="none" stroke="#8c8c8c" stroke-width="1.4"/><path d="M1894.2 1047L1895.6 1062.6H1906.4L1907.8 1047" fill="none" stroke="#8c8c8c" stroke-width="1.5"/><path d="M1898.4 1049.4V1060.4M1901 1049.4V1060.4M1903.6 1049.4V1060.4" stroke="#8c8c8c" stroke-width="1.2"/><path d="M1641 950.7L1790 1033.4" stroke="#e31e1e" stroke-width="3.6" stroke-linecap="round"/><path d="M1784.6 1021.2Q1788.6 1027 1790.6 1033.6Q1782 1034 1773.4 1035.4" fill="none" stroke="#e31e1e" stroke-width="3.8" stroke-linecap="round" stroke-linejoin="round"/></svg>
<span style="left:1765.6px;top:1042.5px;font-family:'Liberation Serif',serif;font-style:italic;font-size:15.5px;line-height:20px;color:#fff;letter-spacing:-0.3px;">fx</span>
</body></html>
